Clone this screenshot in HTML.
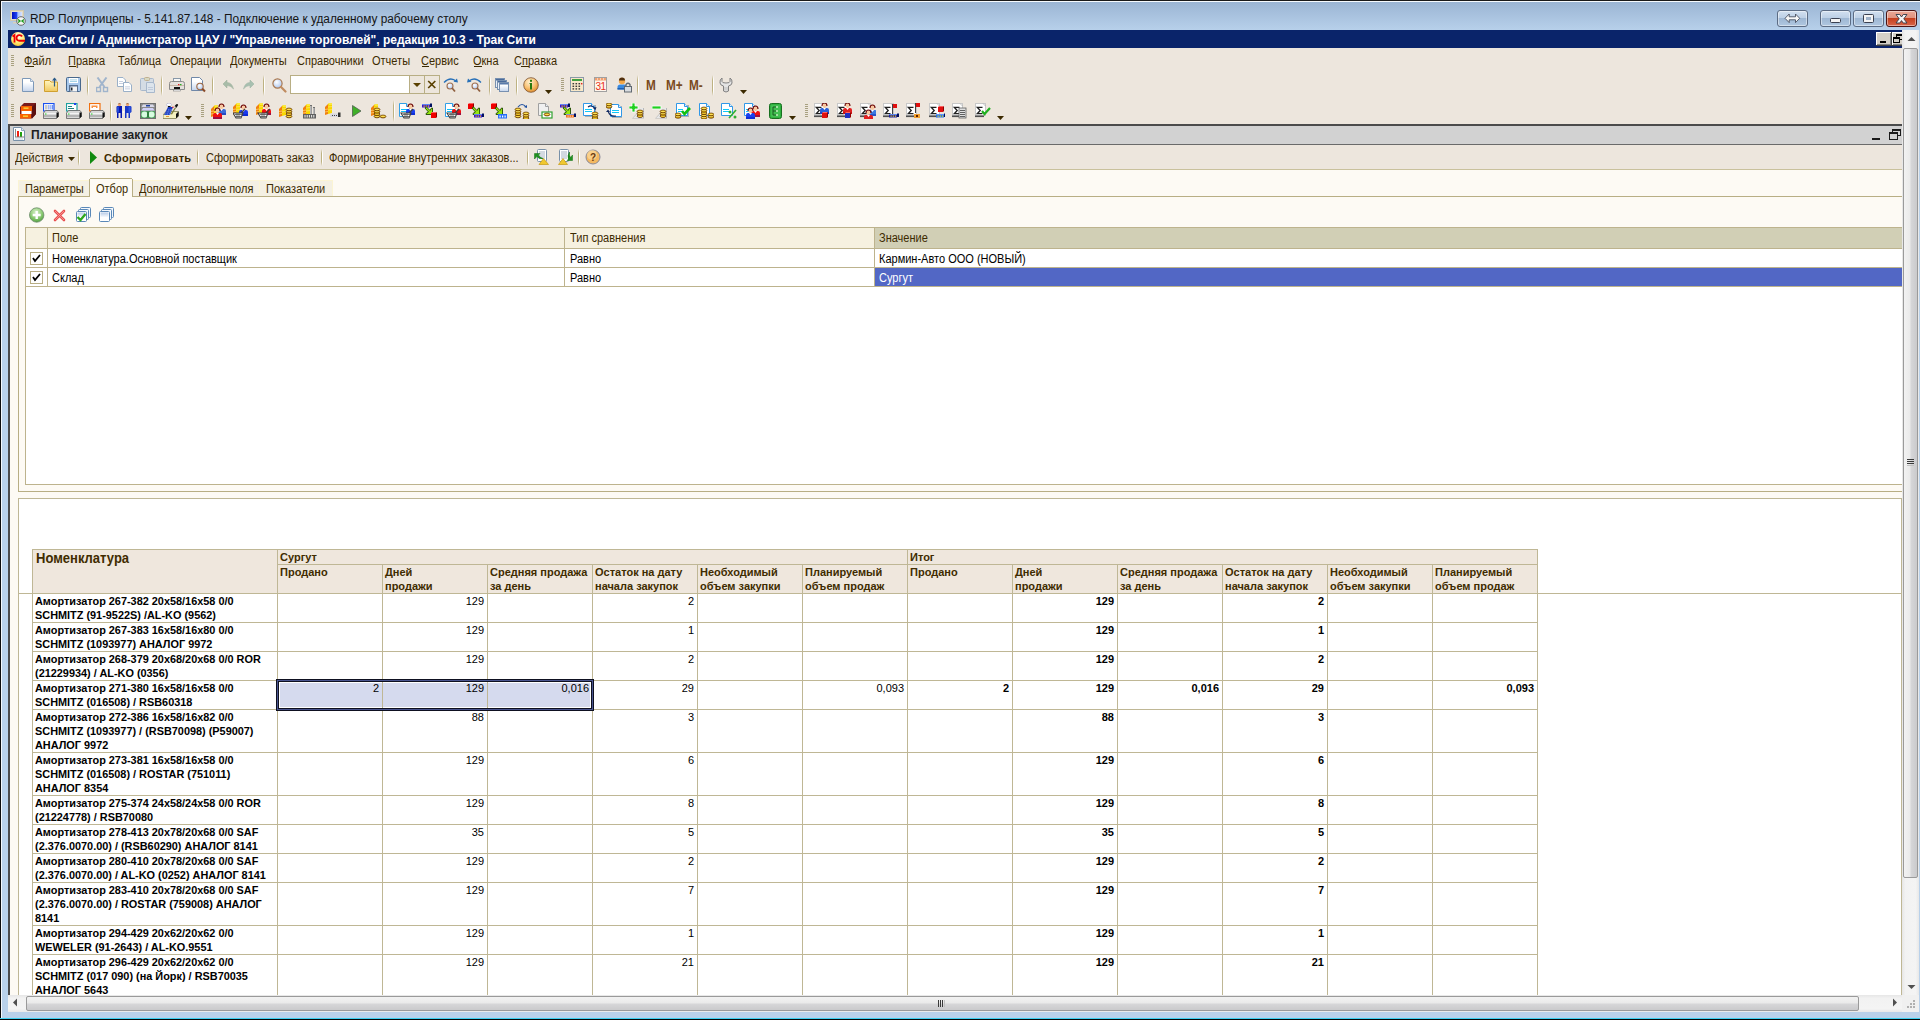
<!DOCTYPE html><html><head><meta charset="utf-8"><style>
html,body{margin:0;padding:0;width:1920px;height:1020px;overflow:hidden;background:#000}
body>div,body>svg{position:absolute}
.t{position:absolute;white-space:pre;font-family:"Liberation Sans",sans-serif}
</style></head><body>
<div style="left:0px;top:0px;width:1920px;height:1020px;background:#B9D1EA;"></div>
<div style="left:0px;top:2px;width:1920px;height:28px;background:linear-gradient(#9BB5D4,#B7D0EA);"></div>
<div style="left:0px;top:0px;width:1px;height:1020px;background:#0B0B0B;"></div>
<div style="left:0px;top:0px;width:1920px;height:1px;background:#1A1A1A;"></div>
<div style="left:1px;top:1px;width:1px;height:1017px;background:#F4F8FC;"></div>
<div style="left:1px;top:1px;width:1919px;height:1px;background:#F6FAFE;"></div>
<div style="left:0px;top:1018px;width:1920px;height:1px;background:#3CCFF0;"></div>
<div style="left:0px;top:1019px;width:1920px;height:1px;background:#050505;"></div>
<svg style="left:10px;top:10px;" width="16" height="16" viewBox="0 0 16 16">
<defs><linearGradient id="gScr" x1="0" y1="0" x2="1" y2="0"><stop offset="0" stop-color="#0010C0"/><stop offset="0.45" stop-color="#2040F0"/><stop offset="0.6" stop-color="#A8C0FF"/><stop offset="1" stop-color="#D8E4FF"/></linearGradient></defs>
<rect x="0.5" y="0.5" width="13" height="10" fill="#E4DCC8" stroke="#D0C8B0"/>
<rect x="2" y="2" width="10" height="7" fill="url(#gScr)"/>
<rect x="3" y="12" width="4" height="1.5" fill="#D8D0BC"/>
<circle cx="11" cy="11" r="4.3" fill="#F4F4F4" stroke="#6A6A6A" stroke-width="1"/>
<path d="M8 9.5 L10 11 L8 12.5 M14 9.5 L12 11 L14 12.5" stroke="#1A9A1A" stroke-width="1.3" fill="none"/>
</svg>
<div class="t" style="left:30px;top:13px;font-size:12px;line-height:12px;color:#141414;transform:scaleX(0.988);transform-origin:0 0;">RDP Полуприцепы - 5.141.87.148 - Подключение к удаленному рабочему столу</div>
<div style="left:1777px;top:10px;width:31px;height:17px;background:linear-gradient(#D2E0F0 0%,#BDD0E6 45%,#9EB7D3 50%,#B0C7E0 100%);border:1px solid #5C6C84;border-radius:3px;box-sizing:border-box;box-shadow:inset 0 0 0 1px rgba(255,255,255,0.45)"></div>
<svg style="left:1777px;top:10px;" width="31" height="17" viewBox="0 0 31 17"><path d="M8 8.3 L12.2 4 L12.2 6.8 L18.5 6.8 L18.5 4 L22.7 8.3 L18.5 12.6 L18.5 9.8 L12.2 9.8 L12.2 12.6 Z" fill="#F8F8F8" stroke="#4A5060" stroke-width="0.9"/></svg>
<div style="left:1820px;top:10px;width:31px;height:17px;background:linear-gradient(#D2E0F0 0%,#BDD0E6 45%,#9EB7D3 50%,#B0C7E0 100%);border:1px solid #5C6C84;border-radius:3px;box-sizing:border-box;box-shadow:inset 0 0 0 1px rgba(255,255,255,0.45)"></div>
<svg style="left:1820px;top:10px;" width="31" height="17" viewBox="0 0 31 17"><rect x="10.5" y="8.5" width="10" height="4" rx="1" fill="#F4F4F4" stroke="#3A4050"/></svg>
<div style="left:1853px;top:10px;width:31px;height:17px;background:linear-gradient(#D2E0F0 0%,#BDD0E6 45%,#9EB7D3 50%,#B0C7E0 100%);border:1px solid #5C6C84;border-radius:3px;box-sizing:border-box;box-shadow:inset 0 0 0 1px rgba(255,255,255,0.45)"></div>
<svg style="left:1853px;top:10px;" width="31" height="17" viewBox="0 0 31 17"><rect x="10.5" y="4.5" width="10" height="8" rx="1" fill="#F4F4F4" stroke="#3A4050"/><rect x="13" y="7" width="5" height="3" fill="#9FB2CA"/></svg>
<div style="left:1886px;top:10px;width:31px;height:17px;background:linear-gradient(#EBA896 0%,#E19380 45%,#C5401F 50%,#D8664A 100%);border:1px solid #4B1414;border-radius:3px;box-sizing:border-box;box-shadow:inset 0 0 0 1px rgba(255,255,255,0.45)"></div>
<svg style="left:1886px;top:10px;" width="31" height="17" viewBox="0 0 31 17"><path d="M10 4.5 L13.8 4.5 L15.5 7 L17.2 4.5 L21 4.5 L17.8 8.8 L21 13 L17.2 13 L15.5 10.6 L13.8 13 L10 13 L13.2 8.8 Z" fill="#F4F4F4" stroke="#303A48" stroke-width="0.9"/></svg>
<div style="left:8px;top:30px;width:1894px;height:18px;background:#0A246A;"></div>
<svg style="left:11px;top:32px;" width="15" height="15" viewBox="0 0 15 15">
<defs><radialGradient id="g1c" cx="0.5" cy="0.3" r="0.75"><stop offset="0" stop-color="#FFFFF0"/><stop offset="0.55" stop-color="#FFF080"/><stop offset="1" stop-color="#F0C030"/></radialGradient></defs>
<circle cx="7" cy="7" r="7" fill="url(#g1c)"/>
<path d="M1.5 4.5 L3.5 3 L3.5 10.5" stroke="#F00000" stroke-width="1.8" fill="none"/>
<path d="M11 4.5 C10 2.5 6 2.5 5.5 5.5 C5.3 7.5 6.5 8.7 8.5 8.7 L14 8.7" stroke="#F00000" stroke-width="1.9" fill="none"/>
</svg>
<div class="t" style="left:28px;top:34px;font-size:12px;line-height:12px;color:#FFFFFF;font-weight:bold;">Трак Сити / Администратор ЦАУ / &quot;Управление торговлей&quot;, редакция 10.3 - Трак Сити</div>
<div style="left:1876px;top:32px;width:16px;height:14px;background:#D4D0C8;box-shadow:inset -1px -1px #404040, inset 1px 1px #FFFFFF, inset -2px -2px #808080"></div>
<div style="left:1892px;top:32px;width:16px;height:14px;background:#D4D0C8;box-shadow:inset -1px -1px #404040, inset 1px 1px #FFFFFF, inset -2px -2px #808080"></div>
<div style="left:1880px;top:41px;width:6px;height:2px;background:#000;"></div>
<svg style="left:1892px;top:32px;" width="10" height="14" viewBox="0 0 10 14"><rect x="4.5" y="2.5" width="6" height="5" fill="none" stroke="#000"/><rect x="4" y="2" width="7" height="2" fill="#000"/><rect x="1.5" y="5.5" width="6" height="5" fill="#D4D0C8" stroke="#000"/><rect x="1" y="5" width="7" height="2" fill="#000"/></svg>
<div style="left:1902px;top:30px;width:1px;height:18px;background:#F0F0F0;"></div>
<div style="left:8px;top:48px;width:1894px;height:76px;background:#EDE6DD;"></div>
<svg style="left:11px;top:55px;" width="4" height="11" viewBox="0 0 4 11"><rect x="0" y="0" width="3" height="1" fill="#A8A080"/><rect x="0" y="2" width="3" height="1" fill="#A8A080"/><rect x="0" y="4" width="3" height="1" fill="#A8A080"/><rect x="0" y="6" width="3" height="1" fill="#A8A080"/><rect x="0" y="8" width="3" height="1" fill="#A8A080"/><rect x="0" y="10" width="3" height="1" fill="#A8A080"/></svg>
<div class="t" style="left:24px;top:55px;font-size:12px;line-height:12px;color:#3C2A00;transform:scaleX(0.917);transform-origin:0 0;">Файл</div>
<div class="t" style="left:68px;top:55px;font-size:12px;line-height:12px;color:#3C2A00;transform:scaleX(0.917);transform-origin:0 0;">Правка</div>
<div class="t" style="left:118px;top:55px;font-size:12px;line-height:12px;color:#3C2A00;transform:scaleX(0.917);transform-origin:0 0;">Таблица</div>
<div class="t" style="left:170px;top:55px;font-size:12px;line-height:12px;color:#3C2A00;transform:scaleX(0.917);transform-origin:0 0;">Операции</div>
<div class="t" style="left:230px;top:55px;font-size:12px;line-height:12px;color:#3C2A00;transform:scaleX(0.917);transform-origin:0 0;">Документы</div>
<div class="t" style="left:297px;top:55px;font-size:12px;line-height:12px;color:#3C2A00;transform:scaleX(0.917);transform-origin:0 0;">Справочники</div>
<div class="t" style="left:372px;top:55px;font-size:12px;line-height:12px;color:#3C2A00;transform:scaleX(0.917);transform-origin:0 0;">Отчеты</div>
<div class="t" style="left:421px;top:55px;font-size:12px;line-height:12px;color:#3C2A00;transform:scaleX(0.917);transform-origin:0 0;">Сервис</div>
<div class="t" style="left:473px;top:55px;font-size:12px;line-height:12px;color:#3C2A00;transform:scaleX(0.917);transform-origin:0 0;">Окна</div>
<div class="t" style="left:514px;top:55px;font-size:12px;line-height:12px;color:#3C2A00;transform:scaleX(0.917);transform-origin:0 0;">Справка</div>
<div style="left:25px;top:66px;width:9px;height:1px;background:#3C2A00;"></div>
<div style="left:69px;top:66px;width:7px;height:1px;background:#3C2A00;"></div>
<div style="left:422px;top:66px;width:7px;height:1px;background:#3C2A00;"></div>
<div style="left:474px;top:66px;width:8px;height:1px;background:#3C2A00;"></div>
<div style="left:521px;top:66px;width:8px;height:1px;background:#3C2A00;"></div>
<svg style="left:0;top:0;position:absolute" width="0" height="0"><defs>
<linearGradient id="gPage" x1="0" y1="0" x2="0" y2="1"><stop offset="0.3" stop-color="#FFFFFF"/><stop offset="1" stop-color="#C4D4EC"/></linearGradient>
<linearGradient id="gFold" x1="0" y1="0" x2="0" y2="1"><stop offset="0" stop-color="#FFF6C0"/><stop offset="1" stop-color="#F0C860"/></linearGradient>
<radialGradient id="gInfo" cx="0.4" cy="0.3" r="0.7"><stop offset="0" stop-color="#FFF0D0"/><stop offset="0.6" stop-color="#F8C070"/><stop offset="1" stop-color="#E09030"/></radialGradient>
<radialGradient id="gLens" cx="0.4" cy="0.35" r="0.7"><stop offset="0" stop-color="#FFFFFF"/><stop offset="1" stop-color="#A8C4F0"/></radialGradient>
</defs><svg width="0" height="0"><defs>
<radialGradient id="gAdd" cx="0.45" cy="0.3" r="0.75"><stop offset="0" stop-color="#D8F0C8"/><stop offset="0.6" stop-color="#88C870"/><stop offset="1" stop-color="#4A9A38"/></radialGradient>
<linearGradient id="gBox" x1="0" y1="0" x2="0" y2="1"><stop offset="0" stop-color="#B8CCE8"/><stop offset="1" stop-color="#FFFFFF"/></linearGradient>
</defs></svg></svg>
<svg style="left:11px;top:78px;" width="4" height="13" viewBox="0 0 4 13"><rect x="0" y="0" width="3" height="1" fill="#A8A080"/><rect x="0" y="2" width="3" height="1" fill="#A8A080"/><rect x="0" y="4" width="3" height="1" fill="#A8A080"/><rect x="0" y="6" width="3" height="1" fill="#A8A080"/><rect x="0" y="8" width="3" height="1" fill="#A8A080"/><rect x="0" y="10" width="3" height="1" fill="#A8A080"/><rect x="0" y="12" width="3" height="1" fill="#A8A080"/></svg>
<svg style="left:21px;top:77px;" width="16" height="16" viewBox="0 0 16 16"><path d="M1.5 1.5 L9.5 1.5 L12.5 4.5 L12.5 14.5 L1.5 14.5 Z" fill="url(#gPage)" stroke="#7C98B8"/><path d="M9.5 1.5 L9.5 4.5 L12.5 4.5" fill="#DDE6F2" stroke="#9AB0C8"/></svg>
<svg style="left:43px;top:77px;" width="16" height="16" viewBox="0 0 16 16"><path d="M1.5 3.5 L6.5 3.5 L8 5 L14.5 5 L14.5 14.5 L1.5 14.5 Z" fill="url(#gFold)" stroke="#D0A030"/><path d="M11.5 9.5 L11.5 1" stroke="#2A5A88" stroke-width="1.2"/><path d="M9 3.5 L11.5 0.5 L14 3.5 Z" fill="#2A5A88"/></svg>
<svg style="left:65px;top:77px;" width="16" height="16" viewBox="0 0 16 16"><rect x="1.5" y="0.5" width="14" height="14" rx="1" fill="#A8C8EC" stroke="#48688C"/><rect x="4" y="1" width="9" height="5" fill="#FFFFFF"/><rect x="5" y="2.5" width="7" height="0.8" fill="#90C8E0"/><rect x="5" y="4.2" width="7" height="0.8" fill="#90C8E0"/><rect x="4" y="8" width="9" height="6.5" fill="#5A7090"/><rect x="5.5" y="9.5" width="6.5" height="5" fill="#F4F4F4"/><rect x="6" y="10.5" width="1.5" height="3" fill="#202830"/></svg>
<svg style="left:96px;top:77px;" width="16" height="16" viewBox="0 0 16 16"><path d="M1.5 0.5 L8.5 10 M10.5 0.5 L3.5 10" fill="none" stroke="#A0B4CC" stroke-width="2"/><rect x="0.5" y="10.5" width="4" height="4" fill="none" stroke="#A0B4CC" stroke-width="1.4"/><rect x="7.5" y="10.5" width="4" height="4" fill="none" stroke="#A0B4CC" stroke-width="1.4"/></svg>
<svg style="left:117px;top:77px;" width="16" height="16" viewBox="0 0 16 16"><path d="M0.5 0.5 L6 0.5 L8.5 3 L8.5 9.5 L0.5 9.5 Z" fill="#FFFFFF" stroke="#9AB0C8"/><rect x="2" y="4" width="4" height="0.8" fill="#B8C4D8"/><rect x="2" y="6" width="4" height="0.8" fill="#B8C4D8"/><path d="M6.5 5.5 L12 5.5 L14.5 8 L14.5 14.5 L6.5 14.5 Z" fill="#FFFFFF" stroke="#9AB0C8"/><rect x="8" y="9.5" width="5" height="0.8" fill="#B8C4D8"/><rect x="8" y="11.5" width="5" height="0.8" fill="#B8C4D8"/></svg>
<svg style="left:140px;top:77px;" width="16" height="16" viewBox="0 0 16 16"><rect x="0.5" y="1.5" width="13" height="12" rx="1" fill="#D4DCE4" stroke="#A8B8CC"/><rect x="4.5" y="0.5" width="5" height="3" rx="1" fill="#D8D8C0" stroke="#C0B090"/><path d="M6.5 5.5 L13 5.5 L14.5 7 L14.5 15.5 L6.5 15.5 Z" fill="#DCE4EC" stroke="#A8B8CC"/><rect x="8" y="10" width="5" height="0.8" fill="#B8C4D8"/><rect x="8" y="12" width="5" height="0.8" fill="#B8C4D8"/></svg>
<svg style="left:169px;top:77px;" width="16" height="16" viewBox="0 0 16 16"><rect x="4.5" y="1.5" width="7" height="4" fill="#F8F8F8" stroke="#8898A8"/><path d="M0.5 6.5 Q0.5 4.5 2.5 4.5 L13.5 4.5 Q15.5 4.5 15.5 6.5 L15.5 12.5 L0.5 12.5 Z" fill="#E4E0DC" stroke="#8A8A8A"/><rect x="1" y="8" width="14" height="1" fill="#C8B8A8"/><rect x="5" y="10" width="6" height="2.5" fill="#101010"/><rect x="4.5" y="12.5" width="7" height="1.5" fill="#FFFFFF" stroke="#808080" stroke-width="0.6"/><rect x="9" y="7" width="1.5" height="1.2" fill="#E02020"/><rect x="11" y="7" width="1.5" height="1.2" fill="#20B020"/></svg>
<svg style="left:191px;top:77px;" width="16" height="16" viewBox="0 0 16 16"><path d="M0.5 0.5 L8.5 0.5 L11.5 3.5 L11.5 13.5 L0.5 13.5 Z" fill="url(#gPage)" stroke="#7088A8"/><circle cx="9" cy="9.5" r="3.2" fill="url(#gLens)" stroke="#A06840" stroke-width="1.1"/><path d="M11.3 11.8 L14 14.5" stroke="#8A4A28" stroke-width="2"/></svg>
<svg style="left:221px;top:77px;" width="16" height="16" viewBox="0 0 16 16"><path d="M2 7 L6 3 L6 5.5 Q11 5.5 12.5 12 Q10 8.5 6 8.5 L6 11 Z" fill="#A8BCA8" stroke="#98AC98" stroke-width="0.5"/></svg>
<svg style="left:240px;top:77px;" width="16" height="16" viewBox="0 0 16 16"><path d="M14 7 L10 3 L10 5.5 Q5 5.5 3.5 12 Q6 8.5 10 8.5 L10 11 Z" fill="#A8C0B0" stroke="#98B0A0" stroke-width="0.5"/></svg>
<svg style="left:271px;top:77px;" width="16" height="16" viewBox="0 0 16 16"><circle cx="6.5" cy="6.5" r="4.6" fill="url(#gLens)" stroke="#A87850" stroke-width="1.2"/><path d="M9.8 9.8 L14.5 14.5" stroke="#C08C60" stroke-width="2.2" stroke-linecap="round"/></svg>
<svg style="left:443px;top:77px;" width="16" height="16" viewBox="0 0 16 16"><path d="M1 5.5 Q7.5 -1 13.5 4.5" fill="none" stroke="#2870B8" stroke-width="1.3"/><path d="M10.5 4.8 L15 5.5 L14 1.5 Z" fill="#2870B8"/><circle cx="7" cy="9" r="3" fill="url(#gLens)" stroke="#A07050" stroke-width="1.1"/><path d="M9 11 L12 14.5" stroke="#906040" stroke-width="1.8"/></svg>
<svg style="left:466px;top:77px;" width="16" height="16" viewBox="0 0 16 16"><path d="M15 5.5 Q8.5 -1 2.5 4.5" fill="none" stroke="#2870B8" stroke-width="1.3"/><path d="M5.5 4.8 L1 5.5 L2 1.5 Z" fill="#2870B8"/><circle cx="9" cy="9" r="3" fill="url(#gLens)" stroke="#A07050" stroke-width="1.1"/><path d="M11 11 L14 14.5" stroke="#906040" stroke-width="1.8"/></svg>
<svg style="left:494px;top:77px;" width="16" height="16" viewBox="0 0 16 16"><rect x="1.5" y="1.5" width="9" height="9" fill="#E8EEF6" stroke="#7890B0"/><rect x="2" y="2" width="8" height="1.5" fill="#4A6A9A"/><rect x="3.5" y="3.5" width="9" height="9" fill="#EEF2F8" stroke="#7890B0"/><rect x="4" y="4" width="8" height="1.5" fill="#4A6A9A"/><rect x="5.5" y="5.5" width="9" height="9" fill="url(#gPage)" stroke="#7890B0"/><rect x="6" y="6" width="8" height="1.5" fill="#5A7AAA"/></svg>
<svg style="left:523px;top:77px;" width="16" height="16" viewBox="0 0 16 16"><circle cx="8" cy="8" r="7.3" fill="url(#gInfo)" stroke="#7A5030" stroke-width="0.8"/><rect x="7" y="2.8" width="2" height="2" fill="#2A7A10"/><path d="M6.5 6 L9 6 L9 12.5 L7 12.5 L7 7 L6.5 7 Z" fill="#2A7A10"/></svg>
<svg style="left:570px;top:77px;" width="16" height="16" viewBox="0 0 16 16"><rect x="0.5" y="0.5" width="13" height="14" fill="#F8E8C8" stroke="#8A9AA8"/><rect x="2" y="2" width="10" height="2" fill="#40A040"/><rect x="2.5" y="6.0" width="1.6" height="1.4" fill="#3A3A3A"/><rect x="5.5" y="6.0" width="1.6" height="1.4" fill="#3A3A3A"/><rect x="8.5" y="6.0" width="1.6" height="1.4" fill="#3A3A3A"/><rect x="2.5" y="8.6" width="1.6" height="1.4" fill="#3A3A3A"/><rect x="5.5" y="8.6" width="1.6" height="1.4" fill="#3A3A3A"/><rect x="8.5" y="8.6" width="1.6" height="1.4" fill="#3A3A3A"/><rect x="2.5" y="11.2" width="1.6" height="1.4" fill="#3A3A3A"/><rect x="5.5" y="11.2" width="1.6" height="1.4" fill="#3A3A3A"/><rect x="8.5" y="11.2" width="1.6" height="1.4" fill="#3A3A3A"/><rect x="11" y="6" width="1.4" height="1.4" fill="#E02020"/></svg>
<svg style="left:594px;top:77px;" width="16" height="16" viewBox="0 0 16 16"><rect x="0.5" y="0.5" width="12" height="14" fill="#FFF6EC" stroke="#A0A0A0"/><rect x="1" y="1" width="11" height="2.5" fill="#F0A070"/><rect x="3" y="1.5" width="1" height="1" fill="#fff"/><rect x="6" y="1.5" width="1" height="1" fill="#fff"/><rect x="9" y="1.5" width="1" height="1" fill="#fff"/><text x="6.5" y="13.2" font-family="Liberation Sans" font-size="10" text-anchor="middle" fill="#E83018" letter-spacing="-0.5">31</text></svg>
<svg style="left:617px;top:77px;" width="16" height="16" viewBox="0 0 16 16"><path d="M0.5 12.5 L0.5 10 Q0.5 7.5 3.5 7.5 L7 7.5 Q9.5 7.5 9.5 10 L9.5 12.5 Z" fill="#3A8AE0"/><path d="M0.5 12.5 L9 12.5 L9 11 L0.5 11 Z" fill="#2060B0"/><circle cx="5" cy="4" r="3.2" fill="#F4A848"/><path d="M2 3.5 Q2 0.5 5 0.5 Q8 0.5 8 3.5" fill="#503010"/><rect x="7.5" y="9.5" width="7" height="5.5" fill="#D8DCE0" stroke="#606870"/><path d="M9 9.5 L9 7.5 Q11 5 13 7.5 L13 9.5" fill="none" stroke="#606870" stroke-width="1.3"/></svg>
<svg style="left:718px;top:77px;" width="16" height="16" viewBox="0 0 16 16"><path d="M4 1 L4 4.5 Q4 6 8 6 Q12 6 12 4.5 L12 1 Q14.5 2.5 14 6 Q13.5 8.5 10.5 9 L10.5 14 Q8 16 5.5 14 L5.5 9 Q2.5 8.5 2 6 Q1.5 2.5 4 1 Z" fill="#E4E4E4" stroke="#808080" stroke-width="1"/><path d="M7 10 L7 13.5 M9 10 L9 13.5" stroke="#B0B0B0" stroke-width="0.8"/></svg>
<div style="left:87px;top:75px;width:1px;height:21px;background:linear-gradient(rgba(190,178,130,0),#BEB282 25%,#BEB282 75%,rgba(190,178,130,0))"></div>
<div style="left:88px;top:75px;width:1px;height:21px;background:linear-gradient(rgba(255,255,255,0),#FFFFFF 25%,#FFFFFF 75%,rgba(255,255,255,0))"></div>
<div style="left:161px;top:75px;width:1px;height:21px;background:linear-gradient(rgba(190,178,130,0),#BEB282 25%,#BEB282 75%,rgba(190,178,130,0))"></div>
<div style="left:162px;top:75px;width:1px;height:21px;background:linear-gradient(rgba(255,255,255,0),#FFFFFF 25%,#FFFFFF 75%,rgba(255,255,255,0))"></div>
<div style="left:212px;top:75px;width:1px;height:21px;background:linear-gradient(rgba(190,178,130,0),#BEB282 25%,#BEB282 75%,rgba(190,178,130,0))"></div>
<div style="left:213px;top:75px;width:1px;height:21px;background:linear-gradient(rgba(255,255,255,0),#FFFFFF 25%,#FFFFFF 75%,rgba(255,255,255,0))"></div>
<div style="left:263px;top:75px;width:1px;height:21px;background:linear-gradient(rgba(190,178,130,0),#BEB282 25%,#BEB282 75%,rgba(190,178,130,0))"></div>
<div style="left:264px;top:75px;width:1px;height:21px;background:linear-gradient(rgba(255,255,255,0),#FFFFFF 25%,#FFFFFF 75%,rgba(255,255,255,0))"></div>
<div style="left:489px;top:75px;width:1px;height:21px;background:linear-gradient(rgba(190,178,130,0),#BEB282 25%,#BEB282 75%,rgba(190,178,130,0))"></div>
<div style="left:490px;top:75px;width:1px;height:21px;background:linear-gradient(rgba(255,255,255,0),#FFFFFF 25%,#FFFFFF 75%,rgba(255,255,255,0))"></div>
<div style="left:516px;top:75px;width:1px;height:21px;background:linear-gradient(rgba(190,178,130,0),#BEB282 25%,#BEB282 75%,rgba(190,178,130,0))"></div>
<div style="left:517px;top:75px;width:1px;height:21px;background:linear-gradient(rgba(255,255,255,0),#FFFFFF 25%,#FFFFFF 75%,rgba(255,255,255,0))"></div>
<div style="left:637px;top:75px;width:1px;height:21px;background:linear-gradient(rgba(190,178,130,0),#BEB282 25%,#BEB282 75%,rgba(190,178,130,0))"></div>
<div style="left:638px;top:75px;width:1px;height:21px;background:linear-gradient(rgba(255,255,255,0),#FFFFFF 25%,#FFFFFF 75%,rgba(255,255,255,0))"></div>
<div style="left:712px;top:75px;width:1px;height:21px;background:linear-gradient(rgba(190,178,130,0),#BEB282 25%,#BEB282 75%,rgba(190,178,130,0))"></div>
<div style="left:713px;top:75px;width:1px;height:21px;background:linear-gradient(rgba(255,255,255,0),#FFFFFF 25%,#FFFFFF 75%,rgba(255,255,255,0))"></div>
<div style="left:290px;top:75px;width:150px;height:19px;background:#FFFFFF;border:1px solid #B8AE84;box-sizing:border-box"></div>
<div style="left:410px;top:76px;width:14px;height:17px;background:#EDE6DC;"></div>
<div style="left:425px;top:76px;width:14px;height:17px;background:#EDE6DC;"></div>
<div style="left:409px;top:76px;width:1px;height:17px;background:#B8AE84;"></div>
<div style="left:424px;top:76px;width:1px;height:17px;background:#B8AE84;"></div>
<svg style="left:413px;top:83px;" width="8" height="4" viewBox="0 0 8 4"><path d="M0 0 L8 0 L4 4 Z" fill="#5A4000"/></svg>
<svg style="left:427px;top:80px;" width="10" height="9" viewBox="0 0 10 9"><path d="M1.2 1 L8.3 8 M8.3 1 L1.2 8" stroke="#5A4000" stroke-width="1.7"/></svg>
<svg style="left:545px;top:90px;" width="8" height="5" viewBox="0 0 8 5"><path d="M0 0 L7 0 L3.5 4 Z" fill="#3C2A00"/></svg>
<svg style="left:561px;top:78px;" width="4" height="13" viewBox="0 0 4 13"><rect x="0" y="0" width="3" height="1" fill="#A8A080"/><rect x="0" y="2" width="3" height="1" fill="#A8A080"/><rect x="0" y="4" width="3" height="1" fill="#A8A080"/><rect x="0" y="6" width="3" height="1" fill="#A8A080"/><rect x="0" y="8" width="3" height="1" fill="#A8A080"/><rect x="0" y="10" width="3" height="1" fill="#A8A080"/><rect x="0" y="12" width="3" height="1" fill="#A8A080"/></svg>
<div class="t" style="left:646px;top:78px;font-size:14px;line-height:14px;color:#7A4A1E;font-weight:bold;transform:scaleX(0.84);transform-origin:0 0;">M</div>
<div class="t" style="left:666px;top:78px;font-size:14px;line-height:14px;color:#7A4A1E;font-weight:bold;transform:scaleX(0.84);transform-origin:0 0;">M+</div>
<div class="t" style="left:689px;top:78px;font-size:14px;line-height:14px;color:#7A4A1E;font-weight:bold;transform:scaleX(0.84);transform-origin:0 0;">M-</div>
<svg style="left:740px;top:90px;" width="8" height="5" viewBox="0 0 8 5"><path d="M0 0 L7 0 L3.5 4 Z" fill="#3C2A00"/></svg>
<svg style="left:11px;top:104px;" width="4" height="13" viewBox="0 0 4 13"><rect x="0" y="0" width="3" height="1" fill="#A8A080"/><rect x="0" y="2" width="3" height="1" fill="#A8A080"/><rect x="0" y="4" width="3" height="1" fill="#A8A080"/><rect x="0" y="6" width="3" height="1" fill="#A8A080"/><rect x="0" y="8" width="3" height="1" fill="#A8A080"/><rect x="0" y="10" width="3" height="1" fill="#A8A080"/><rect x="0" y="12" width="3" height="1" fill="#A8A080"/></svg>
<svg style="left:20px;top:103px;" width="16" height="16" viewBox="0 0 16 16"><path d="M4 0 L16 0 L16 11 L12 15.5 L0 15.5 L0 4 Z" fill="#7A1C1C"/><path d="M12 4 L16 0 L16 11 L12 15.5 Z" fill="#5A1010"/><rect x="1" y="3" width="11" height="5" fill="#F86000"/><rect x="3.5" y="4.5" width="5" height="1.3" fill="#F8E040"/><rect x="1.5" y="8" width="10" height="3" fill="#FFFFFF"/><rect x="0" y="11" width="11" height="4.5" fill="#F86000"/><rect x="3" y="12.5" width="5" height="1.3" fill="#F8E040"/></svg>
<svg style="left:43px;top:103px;" width="16" height="16" viewBox="0 0 16 16"><rect x="0.5" y="0.5" width="10.5" height="7.5" fill="#FFFFFF" stroke="#1850F0" stroke-width="1.2"/><rect x="2" y="2" width="2.5" height="4.5" fill="#C8C8C8"/><rect x="5.5" y="2" width="0.8" height="4.5" fill="#4070F0"/><rect x="7.5" y="2" width="0.8" height="4.5" fill="#4070F0"/><rect x="9.2" y="2" width="0.8" height="4.5" fill="#4070F0"/><path d="M0.5 10 L2.5 7.5 L14 7.5 L15.5 9.5 L15.5 13.5 L13.5 15.5 L0.5 15.5 Z" fill="#D8D8D8" stroke="#606060" stroke-width="0.8"/><rect x="1" y="10" width="13" height="1" fill="#F4F4F4"/><rect x="1" y="12.5" width="13" height="1" fill="#909090"/><path d="M13.5 9.5 L15.5 9.5 L15.5 13.5 L13.5 15.5 Z" fill="#101010"/><rect x="2" y="10.5" width="1.5" height="1" fill="#20D020"/></svg>
<svg style="left:66px;top:103px;" width="16" height="16" viewBox="0 0 16 16"><rect x="0.5" y="0.5" width="10.5" height="7.5" fill="#FFFFFF" stroke="#20A0A0" stroke-width="1.2"/><path d="M2 3.5 L6 3.5 M2 5.5 L8 5.5" stroke="#208080" stroke-width="1.1"/><rect x="8" y="0" width="2" height="2" fill="#2040F0"/><path d="M0.5 10 L2.5 7.5 L14 7.5 L15.5 9.5 L15.5 13.5 L13.5 15.5 L0.5 15.5 Z" fill="#D8D8D8" stroke="#606060" stroke-width="0.8"/><rect x="1" y="10" width="13" height="1" fill="#F4F4F4"/><rect x="1" y="12.5" width="13" height="1" fill="#909090"/><path d="M13.5 9.5 L15.5 9.5 L15.5 13.5 L13.5 15.5 Z" fill="#101010"/><rect x="2" y="10.5" width="1.5" height="1" fill="#20D020"/></svg>
<svg style="left:89px;top:103px;" width="16" height="16" viewBox="0 0 16 16"><rect x="0.5" y="0.5" width="10.5" height="7.5" fill="#FFFFFF" stroke="#F07010" stroke-width="1.2"/><path d="M2.5 2.5 L8.5 2.5 L8.5 5 L7 5 L7 4 L4 4 L4 5 L2.5 5 Z" fill="#F89040"/><path d="M0.5 10 L2.5 7.5 L14 7.5 L15.5 9.5 L15.5 13.5 L13.5 15.5 L0.5 15.5 Z" fill="#D8D8D8" stroke="#606060" stroke-width="0.8"/><rect x="1" y="10" width="13" height="1" fill="#F4F4F4"/><rect x="1" y="12.5" width="13" height="1" fill="#909090"/><path d="M13.5 9.5 L15.5 9.5 L15.5 13.5 L13.5 15.5 Z" fill="#101010"/><rect x="2" y="10.5" width="1.5" height="1" fill="#20D020"/></svg>
<svg style="left:116px;top:103px;" width="16" height="16" viewBox="0 0 16 16"><path d="M0.5 4 Q0.5 3 2 3 L6 3 L6 15 L4.5 15 L4.5 10 L2.5 10 L2.5 15 L1 15 L1 10 L0.5 9 Z" fill="#0818B0"/><rect x="1" y="3.5" width="2" height="6" fill="#2048D8"/><path d="M15.5 4 Q15.5 3 14 3 L9 3 L9 15 L10.5 15 L10.5 10 L12.5 10 L12.5 15 L14 15 L14 10 L15.5 9 Z" fill="#1838C8"/><rect x="12.5" y="3.5" width="2" height="6" fill="#3058E0"/><circle cx="3.5" cy="1.6" r="1.6" fill="#E8A070"/><path d="M2 1 Q3.5 -0.5 5 1" fill="#806040"/><circle cx="11.5" cy="1.6" r="1.6" fill="#E8A070"/><path d="M10 1 Q11.5 -0.5 13 1" fill="#806040"/><path d="M6 9 L7.5 8 L9 9 L7.5 10 Z" fill="#FFFFFF"/></svg>
<svg style="left:140px;top:103px;" width="16" height="16" viewBox="0 0 16 16"><rect x="0.5" y="0.5" width="15" height="15" fill="#8A8A8A" stroke="#707070"/><path d="M1.5 4 L3 1.5 L13 1.5 L14.5 4 Z" fill="#D8D8E8"/><rect x="6" y="2" width="4" height="1.5" fill="#2040A0"/><path d="M1.5 7.5 L3 5 L13 5 L14.5 7.5 Z" fill="#D0D0F8"/><rect x="1" y="8" width="14" height="7" fill="#50A060"/><ellipse cx="4.5" cy="11.5" rx="3" ry="3" fill="#D8FCE0"/><ellipse cx="11.5" cy="11.5" rx="3" ry="3" fill="#D8FCE0"/><rect x="7" y="8.5" width="2" height="6" fill="#308040"/></svg>
<svg style="left:163px;top:103px;" width="16" height="16" viewBox="0 0 16 16"><path d="M0 12 L3 8.5 L15.5 8.5 L15.5 13 L13 15.5 L0 15.5 Z" fill="#F4F0C0" stroke="#707040" stroke-width="0.7"/><path d="M13 15.5 L15.5 13 L15.5 8.5 L13 11 Z" fill="#101010"/><path d="M1 12 L5 4 L10 4 L7 12 Z" fill="#1838C0"/><rect x="2.5" y="10.5" width="0.9" height="0.9" fill="#A0C8FF"/><rect x="4.2" y="10.5" width="0.9" height="0.9" fill="#A0C8FF"/><rect x="5.9" y="10.5" width="0.9" height="0.9" fill="#A0C8FF"/><rect x="3.7" y="8.5" width="0.9" height="0.9" fill="#A0C8FF"/><rect x="5.4" y="8.5" width="0.9" height="0.9" fill="#A0C8FF"/><rect x="7.1000000000000005" y="8.5" width="0.9" height="0.9" fill="#A0C8FF"/><rect x="4.9" y="6.5" width="0.9" height="0.9" fill="#A0C8FF"/><rect x="6.6" y="6.5" width="0.9" height="0.9" fill="#A0C8FF"/><rect x="8.3" y="6.5" width="0.9" height="0.9" fill="#A0C8FF"/><path d="M7.5 11 L12 4.5 L13 5 L9 11.5 Z" fill="#808040"/><path d="M12 3.5 Q14 1 14.5 2 L13 4.5" fill="none" stroke="#101010" stroke-width="1.2"/><ellipse cx="6" cy="1.8" rx="2.6" ry="1.6" fill="#FFFFFF" stroke="#A0A0C0" stroke-width="0.5"/><rect x="5" y="3" width="2.5" height="1" fill="#101010"/><rect x="9.5" y="3.5" width="1" height="1.5" fill="#F01010"/><rect x="3" y="13" width="3" height="0.8" fill="#E08020"/></svg>
<svg style="left:211px;top:103px;" width="16" height="16" viewBox="0 0 16 16"><path d="M0 6 L3 3 L3 13 L0 14 Z" fill="#F08010"/><path d="M3 3 L4 2 L7 2 L7 12 L3 13 Z" fill="#F8D800"/><path d="M4 3 L7 3" stroke="#FFFFA0" stroke-width="0.8"/><path d="M0 8.5 L3 8 M0 11 L3 10.5 M3 6 L7 5.5 M3 9 L7 8.5" stroke="#FFE080" stroke-width="0.7"/><path d="M6 12 L6 8 Q6 6 8 6 L13 6 Q15 6 15 8 L15 12 Z" fill="#3A6AD8"/><path d="M6 10 L15 10 L15 12 L6 12 Z" fill="#0010A0" opacity="0.35"/><path d="M9 6 L10.5 8 L12 6 Z" fill="#FFFFFF"/><circle cx="10.5" cy="3.6" r="2.3" fill="#F8C8A0"/><path d="M8 4 Q8 1 10.5 1 Q13 1 13 4" fill="none" stroke="#6A0000" stroke-width="1.1"/><path d="M2 16 L2 12 Q2 10 4 10 L9 10 Q11 10 11 12 L11 16 Z" fill="#F01010"/><path d="M2 14 L11 14 L11 16 L2 16 Z" fill="#0010A0" opacity="0.35"/><path d="M5 10 L6.5 12 L8 10 Z" fill="#FFFFFF"/><circle cx="6.5" cy="7.6" r="2.3" fill="#F8C8A0"/><path d="M4 8 Q4 5 6.5 5 Q9 5 9 8" fill="none" stroke="#6A0000" stroke-width="1.1"/></svg>
<svg style="left:233px;top:103px;" width="16" height="16" viewBox="0 0 16 16"><path d="M0 4 L3 1 L3 11 L0 12 Z" fill="#F08010"/><path d="M3 1 L4 0 L7 0 L7 10 L3 11 Z" fill="#F8D800"/><path d="M4 1 L7 1" stroke="#FFFFA0" stroke-width="0.8"/><path d="M0 6.5 L3 6 M0 9 L3 8.5 M3 4 L7 3.5 M3 7 L7 6.5" stroke="#FFE080" stroke-width="0.7"/><path d="M6 13 L6 9 Q6 7 8 7 L13 7 Q15 7 15 9 L15 13 Z" fill="#1A3AF0"/><path d="M6 11 L15 11 L15 13 L6 13 Z" fill="#0010A0" opacity="0.35"/><path d="M9 7 L10.5 9 L12 7 Z" fill="#FFFFFF"/><circle cx="10.5" cy="4.6" r="2.3" fill="#F8C8A0"/><path d="M8 5 Q8 2 10.5 2 Q13 2 13 5" fill="none" stroke="#6A0000" stroke-width="1.1"/><path d="M0 10 L10 10 L8 15 L3 15 Z" fill="#FFFFFF" stroke="#404040" stroke-width="1.1"/><path d="M2 11.5 L9 11.5 M2.5 13.5 L8.5 13.5 M4 10 L4 15 M6 10 L6 15" stroke="#505050" stroke-width="0.8"/><path d="M8 10 L12 6" stroke="#404040" stroke-width="1.2"/></svg>
<svg style="left:256px;top:103px;" width="16" height="16" viewBox="0 0 16 16"><path d="M0 4 L3 1 L3 11 L0 12 Z" fill="#F08010"/><path d="M3 1 L4 0 L7 0 L7 10 L3 11 Z" fill="#F8D800"/><path d="M4 1 L7 1" stroke="#FFFFA0" stroke-width="0.8"/><path d="M0 6.5 L3 6 M0 9 L3 8.5 M3 4 L7 3.5 M3 7 L7 6.5" stroke="#FFE080" stroke-width="0.7"/><path d="M6 12 L6 8 Q6 6 8 6 L13 6 Q15 6 15 8 L15 12 Z" fill="#F01010"/><path d="M6 10 L15 10 L15 12 L6 12 Z" fill="#0010A0" opacity="0.35"/><path d="M9 6 L10.5 8 L12 6 Z" fill="#FFFFFF"/><circle cx="10.5" cy="3.6" r="2.3" fill="#F8C8A0"/><path d="M8 4 Q8 1 10.5 1 Q13 1 13 4" fill="none" stroke="#6A0000" stroke-width="1.1"/><path d="M2 10 L12 10 L10 15 L5 15 Z" fill="#FFFFFF" stroke="#404040" stroke-width="1.1"/><path d="M4 11.5 L11 11.5 M4.5 13.5 L10.5 13.5 M6 10 L6 15 M8 10 L8 15" stroke="#505050" stroke-width="0.8"/><path d="M10 10 L14 6" stroke="#404040" stroke-width="1.2"/></svg>
<svg style="left:279px;top:103px;" width="16" height="16" viewBox="0 0 16 16"><path d="M0 6 L3 3 L3 13 L0 14 Z" fill="#F08010"/><path d="M3 3 L4 2 L7 2 L7 12 L3 13 Z" fill="#F8D800"/><path d="M4 3 L7 3" stroke="#FFFFA0" stroke-width="0.8"/><path d="M0 8.5 L3 8 M0 11 L3 10.5 M3 6 L7 5.5 M3 9 L7 8.5" stroke="#FFE080" stroke-width="0.7"/><ellipse cx="10" cy="13.399999999999999" rx="2.9" ry="1.4" fill="#F0B800" stroke="#5A3000" stroke-width="0.8"/><rect x="8.2" y="12.7" width="3.6" height="0.9" fill="#FFF080"/><ellipse cx="10" cy="11.1" rx="2.9" ry="1.4" fill="#F0B800" stroke="#5A3000" stroke-width="0.8"/><rect x="8.2" y="10.4" width="3.6" height="0.9" fill="#FFF080"/><ellipse cx="10" cy="8.8" rx="2.9" ry="1.4" fill="#F0B800" stroke="#5A3000" stroke-width="0.8"/><rect x="8.2" y="8.1" width="3.6" height="0.9" fill="#FFF080"/><ellipse cx="10" cy="6.5" rx="2.9" ry="1.4" fill="#F0B800" stroke="#5A3000" stroke-width="0.8"/><rect x="8.2" y="5.8" width="3.6" height="0.9" fill="#FFF080"/></svg>
<svg style="left:302px;top:103px;" width="16" height="16" viewBox="0 0 16 16"><path d="M1 5 L4 2 L4 12 L1 13 Z" fill="#F08010"/><path d="M4 2 L5 1 L8 1 L8 11 L4 12 Z" fill="#F8D800"/><path d="M5 2 L8 2" stroke="#FFFFA0" stroke-width="0.8"/><path d="M1 7.5 L4 7 M1 10 L4 9.5 M4 5 L8 4.5 M4 8 L8 7.5" stroke="#FFE080" stroke-width="0.7"/><rect x="8" y="2" width="2" height="10" fill="#707070"/><rect x="8.5" y="3" width="0.8" height="8" fill="#FFFFFF"/><rect x="11" y="4" width="2" height="8" fill="#707070"/><rect x="11.5" y="5" width="0.8" height="6" fill="#FFFFFF"/><rect x="1" y="11" width="13" height="4.5" fill="#606060"/><rect x="2.5" y="12" width="1" height="2.5" fill="#F0F0F0"/><rect x="4.7" y="12" width="1" height="2.5" fill="#F0F0F0"/><rect x="6.9" y="12" width="1" height="2.5" fill="#F0F0F0"/><rect x="9.100000000000001" y="12" width="1" height="2.5" fill="#F0F0F0"/><rect x="11.3" y="12" width="1" height="2.5" fill="#F0F0F0"/></svg>
<svg style="left:325px;top:103px;" width="16" height="16" viewBox="0 0 16 16"><path d="M0 4 L3 1 L3 11 L0 12 Z" fill="#F08010"/><path d="M3 1 L4 0 L7 0 L7 10 L3 11 Z" fill="#F8D800"/><path d="M4 1 L7 1" stroke="#FFFFA0" stroke-width="0.8"/><path d="M0 6.5 L3 6 M0 9 L3 8.5 M3 4 L7 3.5 M3 7 L7 6.5" stroke="#FFE080" stroke-width="0.7"/><path d="M5 12 L6 10.5 L14 10.5 L14 14 L5 14 Z" fill="#D8D8E0"/><rect x="13" y="9.5" width="2.5" height="4.5" fill="#303030"/><rect x="7" y="12" width="1" height="1" fill="#404040"/><rect x="9" y="12" width="1" height="1" fill="#404040"/><rect x="11" y="12" width="1" height="1" fill="#404040"/></svg>
<svg style="left:348px;top:103px;" width="16" height="16" viewBox="0 0 16 16"><path d="M4.5 2.5 L13 8 L4.5 13.5 Z" fill="#40B028" stroke="#506050" stroke-width="0.8"/></svg>
<svg style="left:371px;top:103px;" width="16" height="16" viewBox="0 0 16 16"><path d="M0 5 L3 2 L3 12 L0 13 Z" fill="#F08010"/><path d="M3 2 L4 1 L7 1 L7 11 L3 12 Z" fill="#F8D800"/><path d="M4 2 L7 2" stroke="#FFFFA0" stroke-width="0.8"/><path d="M0 7.5 L3 7 M0 10 L3 9.5 M3 5 L7 4.5 M3 8 L7 7.5" stroke="#FFE080" stroke-width="0.7"/><ellipse cx="6" cy="13.399999999999999" rx="2.9" ry="1.4" fill="#F0B800" stroke="#5A3000" stroke-width="0.8"/><rect x="4.2" y="12.7" width="3.6" height="0.9" fill="#FFF080"/><ellipse cx="6" cy="11.1" rx="2.9" ry="1.4" fill="#F0B800" stroke="#5A3000" stroke-width="0.8"/><rect x="4.2" y="10.4" width="3.6" height="0.9" fill="#FFF080"/><ellipse cx="6" cy="8.8" rx="2.9" ry="1.4" fill="#F0B800" stroke="#5A3000" stroke-width="0.8"/><rect x="4.2" y="8.1" width="3.6" height="0.9" fill="#FFF080"/><ellipse cx="6" cy="6.5" rx="2.9" ry="1.4" fill="#F0B800" stroke="#5A3000" stroke-width="0.8"/><rect x="4.2" y="5.8" width="3.6" height="0.9" fill="#FFF080"/><ellipse cx="12" cy="13.5" rx="2.9" ry="1.4" fill="#F0B800" stroke="#5A3000" stroke-width="0.8"/><rect x="10.2" y="12.8" width="3.6" height="0.9" fill="#FFF080"/></svg>
<svg style="left:399px;top:103px;" width="16" height="16" viewBox="0 0 16 16"><path d="M0.5 0.5 L7.5 0.5 L10.5 3.5 L10.5 13.5 L0.5 13.5 Z" fill="#FFFFFF" stroke="#30A0E8"/><path d="M7.5 0.5 L7.5 3.5 L10.5 3.5" fill="#E8EEF6" stroke="#30A0E8"/><rect x="2" y="6" width="7" height="1" fill="#10C0F8"/><rect x="2" y="8" width="7" height="1" fill="#10C0F8"/><path d="M7 12 L7 8 Q7 6 9 6 L14 6 Q16 6 16 8 L16 12 Z" fill="#1A40F0"/><path d="M7 10 L16 10 L16 12 L7 12 Z" fill="#0010A0" opacity="0.35"/><path d="M10 6 L11.5 8 L13 6 Z" fill="#FFFFFF"/><circle cx="11.5" cy="3.6" r="2.3" fill="#F8C8A0"/><path d="M9 4 Q9 1 11.5 1 Q14 1 14 4" fill="none" stroke="#6A0000" stroke-width="1.1"/><path d="M2 10 L12 10 L10 15 L5 15 Z" fill="#FFFFFF" stroke="#404040" stroke-width="1.1"/><path d="M4 11.5 L11 11.5 M4.5 13.5 L10.5 13.5 M6 10 L6 15 M8 10 L8 15" stroke="#505050" stroke-width="0.8"/><path d="M10 10 L14 6" stroke="#404040" stroke-width="1.2"/></svg>
<svg style="left:422px;top:103px;" width="16" height="16" viewBox="0 0 16 16"><rect x="0" y="1" width="8" height="3.5" fill="#3A10D0"/><rect x="0" y="1" width="8" height="1" fill="#6AA0FF" opacity="0.8"/><rect x="8" y="0.5" width="2" height="3.5" fill="#001060"/><rect x="1.5" y="2.5" width="1.2" height="1.2" fill="#F8E000"/><rect x="3.7" y="2.5" width="1.2" height="1.2" fill="#F8E000"/><rect x="5.9" y="2.5" width="1.2" height="1.2" fill="#F8E000"/><path d="M3 5 L4.5 4 L8 7.5 L9.5 5 L10.5 5 L10.5 11.5 L4 11.5 L4 10.5 L6.5 9 Z" fill="#98E810" stroke="#1E4A00" stroke-width="0.9"/><rect x="9" y="10" width="5" height="5" fill="#F00000"/><path d="M9 10 L10 9 L15 9 L14 10 Z" fill="#FF6060"/><path d="M14 10 L15 9 L15 14 L14 15 Z" fill="#900000"/></svg>
<svg style="left:445px;top:103px;" width="16" height="16" viewBox="0 0 16 16"><path d="M0.5 0.5 L7.5 0.5 L10.5 3.5 L10.5 13.5 L0.5 13.5 Z" fill="#FFFFFF" stroke="#30A0E8"/><path d="M7.5 0.5 L7.5 3.5 L10.5 3.5" fill="#E8EEF6" stroke="#30A0E8"/><rect x="2" y="6" width="7" height="1" fill="#10C0F8"/><rect x="2" y="8" width="7" height="1" fill="#10C0F8"/><path d="M7 12 L7 8 Q7 6 9 6 L14 6 Q16 6 16 8 L16 12 Z" fill="#F01010"/><path d="M7 10 L16 10 L16 12 L7 12 Z" fill="#0010A0" opacity="0.35"/><path d="M10 6 L11.5 8 L13 6 Z" fill="#FFFFFF"/><circle cx="11.5" cy="3.6" r="2.3" fill="#F8C8A0"/><path d="M9 4 Q9 1 11.5 1 Q14 1 14 4" fill="none" stroke="#6A0000" stroke-width="1.1"/><path d="M2 10 L12 10 L10 15 L5 15 Z" fill="#FFFFFF" stroke="#404040" stroke-width="1.1"/><path d="M4 11.5 L11 11.5 M4.5 13.5 L10.5 13.5 M6 10 L6 15 M8 10 L8 15" stroke="#505050" stroke-width="0.8"/><path d="M10 10 L14 6" stroke="#404040" stroke-width="1.2"/></svg>
<svg style="left:468px;top:103px;" width="16" height="16" viewBox="0 0 16 16"><rect x="0" y="1" width="5" height="5" fill="#F00000"/><path d="M0 1 L1 0 L6 0 L5 1 Z" fill="#FF6060"/><path d="M5 1 L6 0 L6 5 L5 6 Z" fill="#900000"/><path d="M4 5 L5.5 4 L9 7.5 L10.5 5 L11.5 5 L11.5 11.5 L5 11.5 L5 10.5 L7.5 9 Z" fill="#98E810" stroke="#1E4A00" stroke-width="0.9"/><rect x="6" y="11" width="8" height="3.5" fill="#3A10D0"/><rect x="6" y="11" width="8" height="1" fill="#6AA0FF" opacity="0.8"/><rect x="14" y="10.5" width="2" height="3.5" fill="#001060"/><rect x="7.5" y="12.5" width="1.2" height="1.2" fill="#F8E000"/><rect x="9.7" y="12.5" width="1.2" height="1.2" fill="#F8E000"/><rect x="11.9" y="12.5" width="1.2" height="1.2" fill="#F8E000"/></svg>
<svg style="left:491px;top:103px;" width="16" height="16" viewBox="0 0 16 16"><rect x="0" y="1" width="5" height="5" fill="#F00000"/><path d="M0 1 L1 0 L6 0 L5 1 Z" fill="#FF6060"/><path d="M5 1 L6 0 L6 5 L5 6 Z" fill="#900000"/><path d="M4 5 L5.5 4 L9 7.5 L10.5 5 L11.5 5 L11.5 11.5 L5 11.5 L5 10.5 L7.5 9 Z" fill="#98E810" stroke="#1E4A00" stroke-width="0.9"/><rect x="7" y="11" width="9" height="4.5" fill="#2A70F8"/><rect x="8.5" y="12.5" width="1.2" height="2" fill="#fff"/><rect x="11" y="12.5" width="1.2" height="2" fill="#fff"/><rect x="13.5" y="12.5" width="1.2" height="2" fill="#fff"/></svg>
<svg style="left:514px;top:103px;" width="16" height="16" viewBox="0 0 16 16"><ellipse cx="4" cy="13.399999999999999" rx="2.9" ry="1.4" fill="#F0B800" stroke="#5A3000" stroke-width="0.8"/><rect x="2.2" y="12.7" width="3.6" height="0.9" fill="#FFF080"/><ellipse cx="4" cy="11.1" rx="2.9" ry="1.4" fill="#F0B800" stroke="#5A3000" stroke-width="0.8"/><rect x="2.2" y="10.4" width="3.6" height="0.9" fill="#FFF080"/><ellipse cx="4" cy="8.8" rx="2.9" ry="1.4" fill="#F0B800" stroke="#5A3000" stroke-width="0.8"/><rect x="2.2" y="8.1" width="3.6" height="0.9" fill="#FFF080"/><ellipse cx="4" cy="6.5" rx="2.9" ry="1.4" fill="#F0B800" stroke="#5A3000" stroke-width="0.8"/><rect x="2.2" y="5.8" width="3.6" height="0.9" fill="#FFF080"/><ellipse cx="12" cy="15.1" rx="2.9" ry="1.4" fill="#F0B800" stroke="#5A3000" stroke-width="0.8"/><rect x="10.2" y="14.4" width="3.6" height="0.9" fill="#FFF080"/><ellipse cx="12" cy="12.8" rx="2.9" ry="1.4" fill="#F0B800" stroke="#5A3000" stroke-width="0.8"/><rect x="10.2" y="12.100000000000001" width="3.6" height="0.9" fill="#FFF080"/><ellipse cx="12" cy="10.5" rx="2.9" ry="1.4" fill="#F0B800" stroke="#5A3000" stroke-width="0.8"/><rect x="10.2" y="9.8" width="3.6" height="0.9" fill="#FFF080"/><path d="M4 4 Q8 -1 12 4" fill="none" stroke="#2050A0" stroke-width="1.2"/><path d="M10 4 L13 5 L13 2" fill="#2050A0"/></svg>
<svg style="left:537px;top:103px;" width="16" height="16" viewBox="0 0 16 16"><path d="M1.5 0.5 L8.5 0.5 L11.5 3.5 L11.5 12.5 L1.5 12.5 Z" fill="#F0F0F0" stroke="#A0A0A0"/><path d="M8.5 0.5 L8.5 3.5 L11.5 3.5" fill="#E8EEF6" stroke="#A0A0A0"/><rect x="5" y="9" width="10" height="6" fill="#FFFFFF" stroke="#30A030" stroke-width="1.2"/><ellipse cx="10" cy="11.5" rx="2.9" ry="1.4" fill="#F0B800" stroke="#5A3000" stroke-width="0.8"/><rect x="8.2" y="10.8" width="3.6" height="0.9" fill="#FFF080"/></svg>
<svg style="left:560px;top:103px;" width="16" height="16" viewBox="0 0 16 16"><rect x="0" y="1" width="8" height="3.5" fill="#3A10D0"/><rect x="0" y="1" width="8" height="1" fill="#6AA0FF" opacity="0.8"/><rect x="8" y="0.5" width="2" height="3.5" fill="#001060"/><rect x="1.5" y="2.5" width="1.2" height="1.2" fill="#F8E000"/><rect x="3.7" y="2.5" width="1.2" height="1.2" fill="#F8E000"/><rect x="5.9" y="2.5" width="1.2" height="1.2" fill="#F8E000"/><path d="M3 5 L4.5 4 L8 7.5 L9.5 5 L10.5 5 L10.5 11.5 L4 11.5 L4 10.5 L6.5 9 Z" fill="#98E810" stroke="#1E4A00" stroke-width="0.9"/><rect x="6" y="11" width="8" height="3.5" fill="#F07020"/><rect x="6" y="11" width="8" height="1" fill="#6AA0FF" opacity="0.8"/><rect x="14" y="10.5" width="2" height="3.5" fill="#001060"/><rect x="7.5" y="12.5" width="1.2" height="1.2" fill="#FFD0A0"/><rect x="9.7" y="12.5" width="1.2" height="1.2" fill="#FFD0A0"/><rect x="11.9" y="12.5" width="1.2" height="1.2" fill="#FFD0A0"/></svg>
<svg style="left:583px;top:103px;" width="16" height="16" viewBox="0 0 16 16"><rect x="2" y="2" width="11" height="12" fill="#B0B0B0"/><path d="M0.5 0.5 L8.5 0.5 L11.5 3.5 L11.5 12.5 L0.5 12.5 Z" fill="#FFFFFF" stroke="#3098E8"/><path d="M8.5 0.5 L8.5 3.5 L11.5 3.5" fill="#E8EEF6" stroke="#3098E8"/><rect x="2" y="6" width="7" height="1" fill="#10C8F8"/><rect x="2" y="8" width="7" height="1" fill="#10C8F8"/><path d="M5 4 Q9 1 12 6" fill="none" stroke="#102860" stroke-width="1.1"/><path d="M10 5 L12.5 7 L13.5 4 Z" fill="#102860"/><ellipse cx="12" cy="15.1" rx="2.9" ry="1.4" fill="#F0B800" stroke="#5A3000" stroke-width="0.8"/><rect x="10.2" y="14.4" width="3.6" height="0.9" fill="#FFF080"/><ellipse cx="12" cy="12.8" rx="2.9" ry="1.4" fill="#F0B800" stroke="#5A3000" stroke-width="0.8"/><rect x="10.2" y="12.100000000000001" width="3.6" height="0.9" fill="#FFF080"/><ellipse cx="12" cy="10.5" rx="2.9" ry="1.4" fill="#F0B800" stroke="#5A3000" stroke-width="0.8"/><rect x="10.2" y="9.8" width="3.6" height="0.9" fill="#FFF080"/></svg>
<svg style="left:606px;top:103px;" width="16" height="16" viewBox="0 0 16 16"><rect x="6" y="3" width="11" height="12" fill="#B0B0B0"/><path d="M4.5 1.5 L12.5 1.5 L15.5 4.5 L15.5 13.5 L4.5 13.5 Z" fill="#FFFFFF" stroke="#3098E8"/><path d="M12.5 1.5 L12.5 4.5 L15.5 4.5" fill="#E8EEF6" stroke="#3098E8"/><rect x="6" y="7" width="7" height="1" fill="#10C8F8"/><rect x="6" y="9" width="7" height="1" fill="#10C8F8"/><ellipse cx="3" cy="3.8" rx="2.9" ry="1.4" fill="#F0B800" stroke="#5A3000" stroke-width="0.8"/><rect x="1.2" y="3.0999999999999996" width="3.6" height="0.9" fill="#FFF080"/><ellipse cx="3" cy="1.5" rx="2.9" ry="1.4" fill="#F0B800" stroke="#5A3000" stroke-width="0.8"/><rect x="1.2" y="0.8" width="3.6" height="0.9" fill="#FFF080"/><path d="M10 13 Q4 14 2 8" fill="none" stroke="#102860" stroke-width="1.1"/><path d="M0 9 L2 6.5 L4 9 Z" fill="#102860"/></svg>
<svg style="left:629px;top:103px;" width="16" height="16" viewBox="0 0 16 16"><path d="M3 15.5 L9 9 L9 5 L15 5 L15 15.5 Z" fill="#B8B8B8"/><path d="M9 5 L14 5 L14 15 L4 15 L9 10 Z" fill="#E8E8E8"/><ellipse cx="11" cy="13.1" rx="2.9" ry="1.4" fill="#F0B800" stroke="#5A3000" stroke-width="0.8"/><rect x="9.2" y="12.4" width="3.6" height="0.9" fill="#FFF080"/><ellipse cx="11" cy="10.8" rx="2.9" ry="1.4" fill="#F0B800" stroke="#5A3000" stroke-width="0.8"/><rect x="9.2" y="10.100000000000001" width="3.6" height="0.9" fill="#FFF080"/><ellipse cx="11" cy="8.5" rx="2.9" ry="1.4" fill="#F0B800" stroke="#5A3000" stroke-width="0.8"/><rect x="9.2" y="7.8" width="3.6" height="0.9" fill="#FFF080"/><path d="M3 0 L6 0 L6 3 L9 3 L9 6 L6 6 L6 9 L3 9 L3 6 L0 6 L0 3 L3 3 Z" fill="#20D020" stroke="#FFFFFF" stroke-width="0.8"/></svg>
<svg style="left:652px;top:103px;" width="16" height="16" viewBox="0 0 16 16"><path d="M3 15.5 L9 9 L9 5 L15 5 L15 15.5 Z" fill="#B8B8B8"/><path d="M9 5 L14 5 L14 15 L4 15 L9 10 Z" fill="#E8E8E8"/><ellipse cx="11" cy="13.1" rx="2.9" ry="1.4" fill="#F0B800" stroke="#5A3000" stroke-width="0.8"/><rect x="9.2" y="12.4" width="3.6" height="0.9" fill="#FFF080"/><ellipse cx="11" cy="10.8" rx="2.9" ry="1.4" fill="#F0B800" stroke="#5A3000" stroke-width="0.8"/><rect x="9.2" y="10.100000000000001" width="3.6" height="0.9" fill="#FFF080"/><ellipse cx="11" cy="8.5" rx="2.9" ry="1.4" fill="#F0B800" stroke="#5A3000" stroke-width="0.8"/><rect x="9.2" y="7.8" width="3.6" height="0.9" fill="#FFF080"/><rect x="0" y="3" width="9" height="3" fill="#20D020" stroke="#FFFFFF" stroke-width="0.8"/></svg>
<svg style="left:675px;top:103px;" width="16" height="16" viewBox="0 0 16 16"><rect x="3" y="2" width="11" height="12" fill="#B0B0B0"/><path d="M1.5 0.5 L9.5 0.5 L12.5 3.5 L12.5 12.5 L1.5 12.5 Z" fill="#FFFFFF" stroke="#3098E8"/><path d="M9.5 0.5 L9.5 3.5 L12.5 3.5" fill="#E8EEF6" stroke="#3098E8"/><rect x="3" y="6" width="5" height="1" fill="#10C8F8"/><rect x="3" y="8" width="5" height="1" fill="#10C8F8"/><path d="M7 8 L9.5 11 L15 5" fill="none" stroke="#10C010" stroke-width="2.6"/><ellipse cx="3" cy="13.8" rx="2.9" ry="1.4" fill="#F0B800" stroke="#5A3000" stroke-width="0.8"/><rect x="1.2" y="13.100000000000001" width="3.6" height="0.9" fill="#FFF080"/><ellipse cx="3" cy="11.5" rx="2.9" ry="1.4" fill="#F0B800" stroke="#5A3000" stroke-width="0.8"/><rect x="1.2" y="10.8" width="3.6" height="0.9" fill="#FFF080"/></svg>
<svg style="left:698px;top:103px;" width="16" height="16" viewBox="0 0 16 16"><path d="M1.5 0.5 L8.5 0.5 L11.5 3.5 L11.5 12.5 L1.5 12.5 Z" fill="#FFFFFF" stroke="#3098E8"/><path d="M8.5 0.5 L8.5 3.5 L11.5 3.5" fill="#E8EEF6" stroke="#3098E8"/><ellipse cx="6" cy="14.7" rx="2.9" ry="1.4" fill="#F0B800" stroke="#5A3000" stroke-width="0.8"/><rect x="4.2" y="14.0" width="3.6" height="0.9" fill="#FFF080"/><ellipse cx="6" cy="12.399999999999999" rx="2.9" ry="1.4" fill="#F0B800" stroke="#5A3000" stroke-width="0.8"/><rect x="4.2" y="11.7" width="3.6" height="0.9" fill="#FFF080"/><ellipse cx="6" cy="10.1" rx="2.9" ry="1.4" fill="#F0B800" stroke="#5A3000" stroke-width="0.8"/><rect x="4.2" y="9.4" width="3.6" height="0.9" fill="#FFF080"/><ellipse cx="6" cy="7.8" rx="2.9" ry="1.4" fill="#F0B800" stroke="#5A3000" stroke-width="0.8"/><rect x="4.2" y="7.1" width="3.6" height="0.9" fill="#FFF080"/><ellipse cx="6" cy="5.5" rx="2.9" ry="1.4" fill="#F0B800" stroke="#5A3000" stroke-width="0.8"/><rect x="4.2" y="4.8" width="3.6" height="0.9" fill="#FFF080"/><ellipse cx="13" cy="13.8" rx="2.9" ry="1.4" fill="#F0B800" stroke="#5A3000" stroke-width="0.8"/><rect x="11.2" y="13.100000000000001" width="3.6" height="0.9" fill="#FFF080"/><ellipse cx="13" cy="11.5" rx="2.9" ry="1.4" fill="#F0B800" stroke="#5A3000" stroke-width="0.8"/><rect x="11.2" y="10.8" width="3.6" height="0.9" fill="#FFF080"/></svg>
<svg style="left:721px;top:103px;" width="16" height="16" viewBox="0 0 16 16"><path d="M0.5 0.5 L8.5 0.5 L11.5 3.5 L11.5 12.5 L0.5 12.5 Z" fill="#FFFFFF" stroke="#3098E8"/><path d="M8.5 0.5 L8.5 3.5 L11.5 3.5" fill="#E8EEF6" stroke="#3098E8"/><rect x="2" y="6" width="6" height="1" fill="#10C8F8"/><rect x="2" y="8" width="6" height="1" fill="#10C8F8"/><path d="M8 15 L15 7" stroke="#30B030" stroke-width="1.6"/><circle cx="9" cy="9" r="1.5" fill="#30B030"/><circle cx="14" cy="14" r="1.5" fill="#30B030"/></svg>
<svg style="left:744px;top:103px;" width="16" height="16" viewBox="0 0 16 16"><path d="M0.5 0.5 L8.5 0.5 L11.5 3.5 L11.5 12.5 L0.5 12.5 Z" fill="#FFFFFF" stroke="#3098E8"/><path d="M8.5 0.5 L8.5 3.5 L11.5 3.5" fill="#E8EEF6" stroke="#3098E8"/><rect x="2" y="6" width="5" height="1" fill="#10C8F8"/><rect x="2" y="8" width="5" height="1" fill="#10C8F8"/><path d="M7 14 L7 10 Q7 8 9 8 L14 8 Q16 8 16 10 L16 14 Z" fill="#F01010"/><path d="M7 12 L16 12 L16 14 L7 14 Z" fill="#0010A0" opacity="0.35"/><path d="M10 8 L11.5 10 L13 8 Z" fill="#FFFFFF"/><circle cx="11.5" cy="5.6" r="2.3" fill="#F8C8A0"/><path d="M9 6 Q9 3 11.5 3 Q14 3 14 6" fill="none" stroke="#6A0000" stroke-width="1.1"/><path d="M2 16 L2 12 Q2 10 4 10 L9 10 Q11 10 11 12 L11 16 Z" fill="#1A40F0"/><path d="M2 14 L11 14 L11 16 L2 16 Z" fill="#0010A0" opacity="0.35"/><path d="M5 10 L6.5 12 L8 10 Z" fill="#FFFFFF"/><circle cx="6.5" cy="7.6" r="2.3" fill="#F8C8A0"/><path d="M4 8 Q4 5 6.5 5 Q9 5 9 8" fill="none" stroke="#6A0000" stroke-width="1.1"/></svg>
<svg style="left:767px;top:103px;" width="16" height="16" viewBox="0 0 16 16"><rect x="2.5" y="0.5" width="12" height="15" rx="2" fill="#30B040" stroke="#187020"/><rect x="4" y="2" width="9" height="12" rx="1" fill="#40C050"/><path d="M6 4 L6 12 L10 12 M6 8 L10 8 M6 4 L9 4" stroke="#185020" stroke-width="0.9" fill="none"/><rect x="9" y="3" width="2" height="2" fill="#A0E0A0"/><rect x="9" y="7" width="2" height="2" fill="#A0E0A0"/><rect x="9" y="11" width="2" height="2" fill="#A0E0A0"/></svg>
<svg style="left:814px;top:103px;" width="16" height="16" viewBox="0 0 16 16"><rect x="0.5" y="0.5" width="10" height="12" fill="#FFFFFF" stroke="#C8C8C8"/><path d="M8 0.5 L10.5 3" stroke="#B0B0B0" stroke-width="0.8"/><rect x="0" y="12.5" width="9" height="1.6" fill="#505050"/><path d="M7.5 4.3 L2.3 4.3 L5.2 7.5 L2.3 10.7 L7.5 10.7" fill="none" stroke="#202020" stroke-width="1.3"/><path d="M6 11 L6 7 Q6 5 8 5 L13 5 Q15 5 15 7 L15 11 Z" fill="#2A60D8"/><path d="M6 9 L15 9 L15 11 L6 11 Z" fill="#0010A0" opacity="0.35"/><path d="M9 5 L10.5 7 L12 5 Z" fill="#FFFFFF"/><circle cx="10.5" cy="2.6" r="2.3" fill="#F8C8A0"/><path d="M8 3 Q8 0 10.5 0 Q13 0 13 3" fill="none" stroke="#6A0000" stroke-width="1.1"/><rect x="8" y="10" width="5" height="5" fill="#E01010"/><path d="M8 10 L9 9 L14 9 L13 10 Z" fill="#FF6060"/><path d="M13 10 L14 9 L14 14 L13 15 Z" fill="#900000"/></svg>
<svg style="left:837px;top:103px;" width="16" height="16" viewBox="0 0 16 16"><rect x="0.5" y="0.5" width="10" height="12" fill="#FFFFFF" stroke="#C8C8C8"/><path d="M8 0.5 L10.5 3" stroke="#B0B0B0" stroke-width="0.8"/><rect x="0" y="12.5" width="9" height="1.6" fill="#505050"/><path d="M7.5 4.3 L2.3 4.3 L5.2 7.5 L2.3 10.7 L7.5 10.7" fill="none" stroke="#202020" stroke-width="1.3"/><path d="M6 11 L6 7 Q6 5 8 5 L13 5 Q15 5 15 7 L15 11 Z" fill="#E02020"/><path d="M6 9 L15 9 L15 11 L6 11 Z" fill="#A00000" opacity="0.35"/><path d="M9 5 L10.5 7 L12 5 Z" fill="#FFFFFF"/><circle cx="10.5" cy="2.6" r="2.3" fill="#F8C8A0"/><path d="M8 3 Q8 0 10.5 0 Q13 0 13 3" fill="none" stroke="#6A0000" stroke-width="1.1"/><rect x="8" y="10" width="5" height="5" fill="#2030C0"/><path d="M8 10 L9 9 L14 9 L13 10 Z" fill="#FF6060"/><path d="M13 10 L14 9 L14 14 L13 15 Z" fill="#900000"/></svg>
<svg style="left:860px;top:103px;" width="16" height="16" viewBox="0 0 16 16"><rect x="0.5" y="0.5" width="10" height="12" fill="#FFFFFF" stroke="#C8C8C8"/><path d="M8 0.5 L10.5 3" stroke="#B0B0B0" stroke-width="0.8"/><rect x="0" y="12.5" width="9" height="1.6" fill="#505050"/><path d="M7.5 4.3 L2.3 4.3 L5.2 7.5 L2.3 10.7 L7.5 10.7" fill="none" stroke="#202020" stroke-width="1.3"/><path d="M8 13 L8 9 Q8 7 10 7 L15 7 Q17 7 17 9 L17 13 Z" fill="#3A7AE0"/><path d="M8 11 L17 11 L17 13 L8 13 Z" fill="#0010A0" opacity="0.35"/><path d="M11 7 L12.5 9 L14 7 Z" fill="#FFFFFF"/><circle cx="12.5" cy="4.6" r="2.3" fill="#F8C8A0"/><path d="M10 5 Q10 2 12.5 2 Q15 2 15 5" fill="none" stroke="#6A0000" stroke-width="1.1"/><path d="M4 18 L4 14 Q4 12 6 12 L11 12 Q13 12 13 14 L13 18 Z" fill="#E02020"/><path d="M4 16 L13 16 L13 18 L4 18 Z" fill="#A00000" opacity="0.35"/><path d="M7 12 L8.5 14 L10 12 Z" fill="#FFFFFF"/><circle cx="8.5" cy="9.6" r="2.3" fill="#F8C8A0"/><path d="M6 10 Q6 7 8.5 7 Q11 7 11 10" fill="none" stroke="#6A0000" stroke-width="1.1"/></svg>
<svg style="left:883px;top:103px;" width="16" height="16" viewBox="0 0 16 16"><rect x="0.5" y="0.5" width="10" height="12" fill="#FFFFFF" stroke="#C8C8C8"/><path d="M8 0.5 L10.5 3" stroke="#B0B0B0" stroke-width="0.8"/><rect x="0" y="12.5" width="9" height="1.6" fill="#505050"/><path d="M7.5 4.3 L2.3 4.3 L5.2 7.5 L2.3 10.7 L7.5 10.7" fill="none" stroke="#202020" stroke-width="1.3"/><rect x="9" y="1" width="5" height="4" fill="#E01010"/><rect x="9" y="1" width="1" height="10" fill="#404040"/><rect x="6" y="11" width="8" height="3.5" fill="#2020A0"/><rect x="6" y="11" width="8" height="1" fill="#6AA0FF" opacity="0.8"/><rect x="14" y="10.5" width="2" height="3.5" fill="#001060"/><rect x="7.5" y="12.5" width="1.2" height="1.2" fill="#F8E000"/><rect x="9.7" y="12.5" width="1.2" height="1.2" fill="#F8E000"/><rect x="11.9" y="12.5" width="1.2" height="1.2" fill="#F8E000"/></svg>
<svg style="left:906px;top:103px;" width="16" height="16" viewBox="0 0 16 16"><rect x="0.5" y="0.5" width="10" height="12" fill="#FFFFFF" stroke="#C8C8C8"/><path d="M8 0.5 L10.5 3" stroke="#B0B0B0" stroke-width="0.8"/><rect x="0" y="12.5" width="9" height="1.6" fill="#505050"/><path d="M7.5 4.3 L2.3 4.3 L5.2 7.5 L2.3 10.7 L7.5 10.7" fill="none" stroke="#202020" stroke-width="1.3"/><rect x="9" y="0" width="5" height="4" fill="#E01010"/><rect x="9" y="0" width="1" height="10" fill="#404040"/><rect x="8" y="11" width="6" height="4" fill="#F0A030"/><rect x="10" y="12" width="2" height="2" fill="#602000"/></svg>
<svg style="left:929px;top:103px;" width="16" height="16" viewBox="0 0 16 16"><rect x="0.5" y="0.5" width="10" height="12" fill="#FFFFFF" stroke="#C8C8C8"/><path d="M8 0.5 L10.5 3" stroke="#B0B0B0" stroke-width="0.8"/><rect x="0" y="12.5" width="9" height="1.6" fill="#505050"/><path d="M7.5 4.3 L2.3 4.3 L5.2 7.5 L2.3 10.7 L7.5 10.7" fill="none" stroke="#202020" stroke-width="1.3"/><rect x="9" y="4" width="5" height="5" fill="#E01010"/><path d="M9 4 L10 3 L15 3 L14 4 Z" fill="#FF6060"/><path d="M14 4 L15 3 L15 8 L14 9 Z" fill="#900000"/><rect x="7" y="11" width="8" height="3.5" fill="#2A70E8"/><rect x="7" y="11" width="8" height="1" fill="#6AA0FF" opacity="0.8"/><rect x="15" y="10.5" width="2" height="3.5" fill="#001060"/><rect x="8.5" y="12.5" width="1.2" height="1.2" fill="#F8E000"/><rect x="10.7" y="12.5" width="1.2" height="1.2" fill="#F8E000"/><rect x="12.9" y="12.5" width="1.2" height="1.2" fill="#F8E000"/></svg>
<svg style="left:952px;top:103px;" width="16" height="16" viewBox="0 0 16 16"><rect x="0.5" y="0.5" width="10" height="12" fill="#FFFFFF" stroke="#C8C8C8"/><path d="M8 0.5 L10.5 3" stroke="#B0B0B0" stroke-width="0.8"/><rect x="0" y="12.5" width="9" height="1.6" fill="#505050"/><path d="M7.5 4.3 L2.3 4.3 L5.2 7.5 L2.3 10.7 L7.5 10.7" fill="none" stroke="#202020" stroke-width="1.3"/><rect x="7" y="5" width="7" height="10" fill="#E0E0E0" stroke="#606060" stroke-width="0.8"/><rect x="8" y="7" width="5" height="1" fill="#606060"/><rect x="8" y="9" width="5" height="1" fill="#606060"/><rect x="8" y="11" width="5" height="1" fill="#606060"/><rect x="8" y="13" width="5" height="1" fill="#606060"/></svg>
<svg style="left:975px;top:103px;" width="16" height="16" viewBox="0 0 16 16"><rect x="0.5" y="0.5" width="10" height="12" fill="#FFFFFF" stroke="#C8C8C8"/><path d="M8 0.5 L10.5 3" stroke="#B0B0B0" stroke-width="0.8"/><rect x="0" y="12.5" width="9" height="1.6" fill="#505050"/><path d="M7.5 4.3 L2.3 4.3 L5.2 7.5 L2.3 10.7 L7.5 10.7" fill="none" stroke="#202020" stroke-width="1.3"/><path d="M7 8 L9.5 11 L15 5" fill="none" stroke="#20B020" stroke-width="2.2"/></svg>
<div style="left:110px;top:100px;width:1px;height:22px;background:linear-gradient(rgba(190,178,130,0),#BEB282 25%,#BEB282 75%,rgba(190,178,130,0))"></div>
<div style="left:111px;top:100px;width:1px;height:22px;background:linear-gradient(rgba(255,255,255,0),#FFFFFF 25%,#FFFFFF 75%,rgba(255,255,255,0))"></div>
<div style="left:393px;top:100px;width:1px;height:22px;background:linear-gradient(rgba(190,178,130,0),#BEB282 25%,#BEB282 75%,rgba(190,178,130,0))"></div>
<div style="left:394px;top:100px;width:1px;height:22px;background:linear-gradient(rgba(255,255,255,0),#FFFFFF 25%,#FFFFFF 75%,rgba(255,255,255,0))"></div>
<svg style="left:185px;top:116px;" width="8" height="5" viewBox="0 0 8 5"><path d="M0 0 L7 0 L3.5 4 Z" fill="#3C2A00"/></svg>
<svg style="left:789px;top:116px;" width="8" height="5" viewBox="0 0 8 5"><path d="M0 0 L7 0 L3.5 4 Z" fill="#3C2A00"/></svg>
<svg style="left:997px;top:116px;" width="8" height="5" viewBox="0 0 8 5"><path d="M0 0 L7 0 L3.5 4 Z" fill="#3C2A00"/></svg>
<svg style="left:201px;top:104px;" width="4" height="13" viewBox="0 0 4 13"><rect x="0" y="0" width="3" height="1" fill="#A8A080"/><rect x="0" y="2" width="3" height="1" fill="#A8A080"/><rect x="0" y="4" width="3" height="1" fill="#A8A080"/><rect x="0" y="6" width="3" height="1" fill="#A8A080"/><rect x="0" y="8" width="3" height="1" fill="#A8A080"/><rect x="0" y="10" width="3" height="1" fill="#A8A080"/><rect x="0" y="12" width="3" height="1" fill="#A8A080"/></svg>
<svg style="left:805px;top:104px;" width="4" height="13" viewBox="0 0 4 13"><rect x="0" y="0" width="3" height="1" fill="#A8A080"/><rect x="0" y="2" width="3" height="1" fill="#A8A080"/><rect x="0" y="4" width="3" height="1" fill="#A8A080"/><rect x="0" y="6" width="3" height="1" fill="#A8A080"/><rect x="0" y="8" width="3" height="1" fill="#A8A080"/><rect x="0" y="10" width="3" height="1" fill="#A8A080"/><rect x="0" y="12" width="3" height="1" fill="#A8A080"/></svg>
<div style="left:8px;top:124px;width:1894px;height:2px;background:#4B4B4B;"></div>
<div style="left:8px;top:124px;width:2px;height:871px;background:#4B4B4B;"></div>
<div style="left:10px;top:126px;width:1892px;height:18px;background:#D2D2D2;"></div>
<div style="left:10px;top:144px;width:1892px;height:1px;background:#6A6A6A;"></div>
<svg style="left:13px;top:127px;" width="16" height="16" viewBox="0 0 16 16"><path d="M0.5 0.5 L8.5 0.5 L11.5 3.5 L11.5 13.5 L0.5 13.5 Z" fill="#FFFFFF" stroke="#7890A8"/><path d="M8.5 0.5 L8.5 3.5 L11.5 3.5" fill="#E0E8F0" stroke="#90A8C0"/><rect x="2" y="2" width="1" height="8" fill="#909090"/><rect x="4" y="4" width="2" height="6" fill="#F02010"/><rect x="7" y="5" width="2" height="5" fill="#20A010"/><rect x="2" y="9.5" width="9" height="1" fill="#808080"/><rect x="2" y="11.5" width="8" height="1" fill="#C0D0E0"/></svg>
<div class="t" style="left:31px;top:129px;font-size:12px;line-height:12px;color:#1E1E1E;font-weight:bold;">Планирование закупок</div>
<div style="left:1872px;top:138px;width:8px;height:2px;background:#1A1A1A;"></div>
<svg style="left:1889px;top:129px;" width="12" height="11" viewBox="0 0 12 11"><rect x="3.5" y="0.5" width="8" height="6" fill="none" stroke="#1A1A1A"/><rect x="3" y="0" width="9" height="2" fill="#1A1A1A"/><rect x="0.5" y="3.5" width="8" height="7" fill="#D2D2D2" stroke="#1A1A1A"/><rect x="0" y="3" width="9" height="2" fill="#1A1A1A"/></svg>
<div style="left:10px;top:145px;width:1892px;height:24px;background:#EDE6DD;"></div>
<div style="left:10px;top:169px;width:1892px;height:1px;background:#C9C19C;"></div>
<div class="t" style="left:15px;top:152px;font-size:12px;line-height:12px;color:#3C2A00;transform:scaleX(0.917);transform-origin:0 0;">Действия</div>
<svg style="left:68px;top:157px;" width="7" height="4" viewBox="0 0 7 4"><path d="M0 0 L7 0 L3.5 4 Z" fill="#3C2A00"/></svg>
<div style="left:78px;top:149px;width:1px;height:17px;background:linear-gradient(rgba(190,178,130,0),#BEB282 25%,#BEB282 75%,rgba(190,178,130,0))"></div>
<div style="left:79px;top:149px;width:1px;height:17px;background:linear-gradient(rgba(255,255,255,0),#FFFFFF 25%,#FFFFFF 75%,rgba(255,255,255,0))"></div>
<svg style="left:90px;top:151px;" width="8" height="13" viewBox="0 0 8 13"><path d="M0 0 L7 6.5 L0 13 Z" fill="#108A10"/></svg>
<div class="t" style="left:104px;top:153px;font-size:11px;line-height:11px;color:#3C2A00;font-weight:bold;letter-spacing:0.3px">Сформировать</div>
<div style="left:197px;top:149px;width:1px;height:17px;background:linear-gradient(rgba(190,178,130,0),#BEB282 25%,#BEB282 75%,rgba(190,178,130,0))"></div>
<div style="left:198px;top:149px;width:1px;height:17px;background:linear-gradient(rgba(255,255,255,0),#FFFFFF 25%,#FFFFFF 75%,rgba(255,255,255,0))"></div>
<div class="t" style="left:206px;top:152px;font-size:12px;line-height:12px;color:#3C2A00;transform:scaleX(0.917);transform-origin:0 0;">Сформировать заказ</div>
<div style="left:321px;top:149px;width:1px;height:17px;background:linear-gradient(rgba(190,178,130,0),#BEB282 25%,#BEB282 75%,rgba(190,178,130,0))"></div>
<div style="left:322px;top:149px;width:1px;height:17px;background:linear-gradient(rgba(255,255,255,0),#FFFFFF 25%,#FFFFFF 75%,rgba(255,255,255,0))"></div>
<div class="t" style="left:329px;top:152px;font-size:12px;line-height:12px;color:#3C2A00;transform:scaleX(0.917);transform-origin:0 0;">Формирование внутренних заказов...</div>
<div style="left:527px;top:149px;width:1px;height:17px;background:linear-gradient(rgba(190,178,130,0),#BEB282 25%,#BEB282 75%,rgba(190,178,130,0))"></div>
<div style="left:528px;top:149px;width:1px;height:17px;background:linear-gradient(rgba(255,255,255,0),#FFFFFF 25%,#FFFFFF 75%,rgba(255,255,255,0))"></div>
<svg style="left:534px;top:149px;" width="16" height="16" viewBox="0 0 16 16"><rect x="3.5" y="0.5" width="9" height="12" rx="1" fill="#FFFFFF" stroke="#7890A8"/><rect x="5" y="2.5" width="6" height="1" fill="#A8B4C4"/><rect x="5" y="4.5" width="6" height="1" fill="#A8B4C4"/><rect x="5" y="6.5" width="6" height="1" fill="#A8B4C4"/><rect x="5" y="8.5" width="6" height="1" fill="#A8B4C4"/><path d="M0.5 4.5 L6 4.5 L4.5 6 Q6 9 9 9.5 Q5 10.5 3 7.5 L0.5 10 Z" fill="#209020" stroke="#107010" stroke-width="0.5"/><path d="M5 15.5 L9.5 9.5 L14.5 15.5 Z" fill="#F0C830" stroke="#C09000" stroke-width="0.6"/></svg>
<svg style="left:557px;top:149px;" width="16" height="16" viewBox="0 0 16 16"><rect x="2.5" y="0.5" width="9" height="12" rx="1" fill="#FFFFFF" stroke="#7890A8"/><rect x="4" y="2.5" width="6" height="1" fill="#A8B4C4"/><rect x="4" y="4.5" width="6" height="1" fill="#A8B4C4"/><rect x="4" y="6.5" width="6" height="1" fill="#A8B4C4"/><rect x="4" y="8.5" width="6" height="1" fill="#A8B4C4"/><path d="M15.5 11.5 L10 11.5 L11.5 10 Q10 7 12.5 3 Q12 7 13.5 8.5 L15.5 6 Z" fill="#209020" stroke="#107010" stroke-width="0.5"/><path d="M1.5 15.5 L6 9.5 L10.5 15.5 Z" fill="#F0C830" stroke="#C09000" stroke-width="0.6"/></svg>
<div style="left:578px;top:149px;width:1px;height:17px;background:linear-gradient(rgba(190,178,130,0),#BEB282 25%,#BEB282 75%,rgba(190,178,130,0))"></div>
<div style="left:579px;top:149px;width:1px;height:17px;background:linear-gradient(rgba(255,255,255,0),#FFFFFF 25%,#FFFFFF 75%,rgba(255,255,255,0))"></div>
<svg style="left:585px;top:149px;" width="16" height="16" viewBox="0 0 16 16"><circle cx="8" cy="8" r="7" fill="#F4B860" stroke="#8A8A98"/><circle cx="7" cy="6" r="5" fill="#FCE0A8" opacity="0.6"/><text x="8" y="12" font-family="Liberation Sans" font-size="10" font-weight="bold" text-anchor="middle" fill="#6A3A10">?</text></svg>
<div style="left:10px;top:170px;width:1892px;height:825px;background:#FDFAF4;"></div>
<div style="left:18px;top:196px;width:1884px;height:1px;background:#B8AE84;"></div>
<div style="left:18px;top:196px;width:1px;height:296px;background:#B8AE84;"></div>
<div style="left:18px;top:491px;width:1884px;height:1px;background:#B8AE84;"></div>
<div style="left:18px;top:180px;width:72px;height:16px;background:#F4F0E4;"></div>
<div style="left:18px;top:180px;width:72px;height:1px;background:#FBF4D4;"></div>
<div style="left:133px;top:180px;width:127px;height:16px;background:#F4F0E4;"></div>
<div style="left:133px;top:180px;width:127px;height:1px;background:#FBF4D4;"></div>
<div style="left:260px;top:180px;width:73px;height:16px;background:#F4F0E4;"></div>
<div style="left:260px;top:180px;width:73px;height:1px;background:#FBF4D4;"></div>
<div style="left:18px;top:181px;width:1px;height:15px;background:#FBF4D4;"></div>
<div style="left:259px;top:181px;width:1px;height:15px;background:#FBF4D4;"></div>
<div style="left:332px;top:181px;width:1px;height:15px;background:#FBF4D4;"></div>
<div style="left:90px;top:179px;width:42px;height:18px;background:#FDFAF4;"></div>
<div style="left:90px;top:178px;width:42px;height:1px;background:#B8AE84;"></div>
<div style="left:89px;top:179px;width:1px;height:18px;background:#B8AE84;"></div>
<div style="left:132px;top:179px;width:1px;height:18px;background:#B8AE84;"></div>
<div class="t" style="left:25px;top:183px;font-size:12px;line-height:12px;color:#3C2A00;transform:scaleX(0.917);transform-origin:0 0;">Параметры</div>
<div class="t" style="left:96px;top:183px;font-size:12px;line-height:12px;color:#3C2A00;transform:scaleX(0.917);transform-origin:0 0;">Отбор</div>
<div class="t" style="left:139px;top:183px;font-size:12px;line-height:12px;color:#3C2A00;transform:scaleX(0.917);transform-origin:0 0;">Дополнительные поля</div>
<div class="t" style="left:266px;top:183px;font-size:12px;line-height:12px;color:#3C2A00;transform:scaleX(0.917);transform-origin:0 0;">Показатели</div>
<svg style="left:29px;top:207px;" width="16" height="16" viewBox="0 0 16 16"><circle cx="7.7" cy="8" r="7.2" fill="url(#gAdd)" stroke="#6A8A68" stroke-width="0.8"/><path d="M7.7 4 L7.7 12 M3.7 8 L11.7 8" stroke="#FFFFFF" stroke-width="2.4"/></svg>
<svg style="left:52px;top:207px;" width="16" height="16" viewBox="0 0 16 16"><path d="M3 4 L12 13 M12 4 L3 13" stroke="#E85050" stroke-width="2.6" stroke-linecap="round"/><path d="M3 4 L12 13 M12 4 L3 13" stroke="#F8A0A0" stroke-width="0.8"/></svg>
<svg style="left:75px;top:207px;" width="16" height="16" viewBox="0 0 16 16"><rect x="5.5" y="0.5" width="10" height="10" rx="1" fill="#F4F8FC" stroke="#5A88B8"/><rect x="3.5" y="2.5" width="10" height="10" rx="1" fill="#F4F8FC" stroke="#5A88B8"/><rect x="1.5" y="4.5" width="10" height="10" rx="1" fill="#FFFFFF" stroke="#5A88B8"/><rect x="2.5" y="5.5" width="8" height="5" fill="url(#gBox)"/><path d="M2.5 10 L5.5 13 L10.5 7" fill="none" stroke="#30A820" stroke-width="2.4"/></svg>
<svg style="left:98px;top:207px;" width="16" height="16" viewBox="0 0 16 16"><rect x="5.5" y="0.5" width="10" height="10" rx="1" fill="#F4F8FC" stroke="#5A88B8"/><rect x="3.5" y="2.5" width="10" height="10" rx="1" fill="#F4F8FC" stroke="#5A88B8"/><rect x="1.5" y="4.5" width="10" height="10" rx="1" fill="#FFFFFF" stroke="#5A88B8"/><rect x="2.5" y="5.5" width="8" height="5" fill="url(#gBox)"/></svg>
<div style="left:26px;top:228px;width:1876px;height:256px;background:#FFFFFF;"></div>
<div style="left:26px;top:228px;width:848px;height:20px;background:#F6F1E0;"></div>
<div style="left:875px;top:228px;width:1027px;height:20px;background:#D1CFB5;"></div>
<div style="left:25px;top:227px;width:1877px;height:1px;background:#BDB38D;"></div>
<div style="left:25px;top:227px;width:1px;height:258px;background:#BDB38D;"></div>
<div style="left:25px;top:484px;width:1877px;height:1px;background:#BDB38D;"></div>
<div style="left:25px;top:248px;width:1877px;height:1px;background:#BDB38D;"></div>
<div style="left:25px;top:267px;width:1877px;height:1px;background:#BDB38D;"></div>
<div style="left:25px;top:286px;width:1877px;height:1px;background:#BDB38D;"></div>
<div style="left:47px;top:227px;width:1px;height:60px;background:#BDB38D;"></div>
<div style="left:564px;top:227px;width:1px;height:60px;background:#BDB38D;"></div>
<div style="left:874px;top:227px;width:1px;height:60px;background:#BDB38D;"></div>
<div class="t" style="left:52px;top:232px;font-size:12px;line-height:12px;color:#3C2A00;transform:scaleX(0.917);transform-origin:0 0;">Поле</div>
<div class="t" style="left:570px;top:232px;font-size:12px;line-height:12px;color:#3C2A00;transform:scaleX(0.917);transform-origin:0 0;">Тип сравнения</div>
<div class="t" style="left:879px;top:232px;font-size:12px;line-height:12px;color:#3C2A00;transform:scaleX(0.917);transform-origin:0 0;">Значение</div>
<div style="left:30px;top:252px;width:13px;height:13px;border:1px solid #B8AE84;background:#FFFFFF;box-sizing:border-box"></div>
<svg style="left:30px;top:252px;" width="13" height="13" viewBox="0 0 13 13"><path d="M3 6 L5 9 L10 3" fill="none" stroke="#000" stroke-width="1.8"/></svg>
<div style="left:30px;top:271px;width:13px;height:13px;border:1px solid #B8AE84;background:#FFFFFF;box-sizing:border-box"></div>
<svg style="left:30px;top:271px;" width="13" height="13" viewBox="0 0 13 13"><path d="M3 6 L5 9 L10 3" fill="none" stroke="#000" stroke-width="1.8"/></svg>
<div class="t" style="left:52px;top:253px;font-size:12px;line-height:12px;color:#000;transform:scaleX(0.917);transform-origin:0 0;">Номенклатура.Основной поставщик</div>
<div class="t" style="left:570px;top:253px;font-size:12px;line-height:12px;color:#000;transform:scaleX(0.917);transform-origin:0 0;">Равно</div>
<div class="t" style="left:879px;top:253px;font-size:12px;line-height:12px;color:#000;transform:scaleX(0.917);transform-origin:0 0;">Кармин-Авто ООО (НОВЫЙ)</div>
<div style="left:875px;top:268px;width:1027px;height:18px;background:#5267C5;"></div>
<div class="t" style="left:52px;top:272px;font-size:12px;line-height:12px;color:#000;transform:scaleX(0.917);transform-origin:0 0;">Склад</div>
<div class="t" style="left:570px;top:272px;font-size:12px;line-height:12px;color:#000;transform:scaleX(0.917);transform-origin:0 0;">Равно</div>
<div class="t" style="left:879px;top:272px;font-size:12px;line-height:12px;color:#FFFFFF;transform:scaleX(0.917);transform-origin:0 0;">Сургут</div>
<div style="left:18px;top:498px;width:1884px;height:1px;background:#BFB795;"></div>
<div style="left:18px;top:498px;width:1px;height:497px;background:#BFB795;"></div>
<div style="left:1901px;top:498px;width:1px;height:497px;background:#BFB795;"></div>
<div style="left:19px;top:499px;width:1882px;height:496px;background:#FFFFFF;"></div>
<div style="left:33px;top:550px;width:1504px;height:43px;background:#EFE7DD;"></div>
<div style="left:32px;top:549px;width:1506px;height:1px;background:#BFB795;"></div>
<div style="left:277px;top:564px;width:1261px;height:1px;background:#BFB795;"></div>
<div style="left:18px;top:593px;width:1883px;height:1px;background:#BFB795;"></div>
<div style="left:32px;top:549px;width:1px;height:45px;background:#BFB795;"></div>
<div style="left:277px;top:549px;width:1px;height:45px;background:#BFB795;"></div>
<div style="left:907px;top:549px;width:1px;height:45px;background:#BFB795;"></div>
<div style="left:1537px;top:549px;width:1px;height:45px;background:#BFB795;"></div>
<div style="left:382px;top:564px;width:1px;height:30px;background:#BFB795;"></div>
<div style="left:487px;top:564px;width:1px;height:30px;background:#BFB795;"></div>
<div style="left:592px;top:564px;width:1px;height:30px;background:#BFB795;"></div>
<div style="left:697px;top:564px;width:1px;height:30px;background:#BFB795;"></div>
<div style="left:802px;top:564px;width:1px;height:30px;background:#BFB795;"></div>
<div style="left:1012px;top:564px;width:1px;height:30px;background:#BFB795;"></div>
<div style="left:1117px;top:564px;width:1px;height:30px;background:#BFB795;"></div>
<div style="left:1222px;top:564px;width:1px;height:30px;background:#BFB795;"></div>
<div style="left:1327px;top:564px;width:1px;height:30px;background:#BFB795;"></div>
<div style="left:1432px;top:564px;width:1px;height:30px;background:#BFB795;"></div>
<div class="t" style="left:36px;top:551px;font-size:14px;line-height:14px;color:#402C00;font-weight:bold;transform:scaleX(0.93);transform-origin:0 0;">Номенклатура</div>
<div class="t" style="left:280px;top:552px;font-size:11px;line-height:11px;color:#402C00;font-weight:bold;">Сургут</div>
<div class="t" style="left:910px;top:552px;font-size:11px;line-height:11px;color:#402C00;font-weight:bold;">Итог</div>
<div class="t" style="left:280px;top:567px;font-size:11px;line-height:11px;color:#402C00;font-weight:bold;">Продано</div>
<div class="t" style="left:385px;top:567px;font-size:11px;line-height:11px;color:#402C00;font-weight:bold;">Дней</div>
<div class="t" style="left:385px;top:581px;font-size:11px;line-height:11px;color:#402C00;font-weight:bold;">продажи</div>
<div class="t" style="left:490px;top:567px;font-size:11px;line-height:11px;color:#402C00;font-weight:bold;">Средняя продажа</div>
<div class="t" style="left:490px;top:581px;font-size:11px;line-height:11px;color:#402C00;font-weight:bold;">за день</div>
<div class="t" style="left:595px;top:567px;font-size:11px;line-height:11px;color:#402C00;font-weight:bold;">Остаток на дату</div>
<div class="t" style="left:595px;top:581px;font-size:11px;line-height:11px;color:#402C00;font-weight:bold;">начала закупок</div>
<div class="t" style="left:700px;top:567px;font-size:11px;line-height:11px;color:#402C00;font-weight:bold;">Необходимый</div>
<div class="t" style="left:700px;top:581px;font-size:11px;line-height:11px;color:#402C00;font-weight:bold;">объем закупки</div>
<div class="t" style="left:805px;top:567px;font-size:11px;line-height:11px;color:#402C00;font-weight:bold;">Планируемый</div>
<div class="t" style="left:805px;top:581px;font-size:11px;line-height:11px;color:#402C00;font-weight:bold;">объем продаж</div>
<div class="t" style="left:910px;top:567px;font-size:11px;line-height:11px;color:#402C00;font-weight:bold;">Продано</div>
<div class="t" style="left:1015px;top:567px;font-size:11px;line-height:11px;color:#402C00;font-weight:bold;">Дней</div>
<div class="t" style="left:1015px;top:581px;font-size:11px;line-height:11px;color:#402C00;font-weight:bold;">продажи</div>
<div class="t" style="left:1120px;top:567px;font-size:11px;line-height:11px;color:#402C00;font-weight:bold;">Средняя продажа</div>
<div class="t" style="left:1120px;top:581px;font-size:11px;line-height:11px;color:#402C00;font-weight:bold;">за день</div>
<div class="t" style="left:1225px;top:567px;font-size:11px;line-height:11px;color:#402C00;font-weight:bold;">Остаток на дату</div>
<div class="t" style="left:1225px;top:581px;font-size:11px;line-height:11px;color:#402C00;font-weight:bold;">начала закупок</div>
<div class="t" style="left:1330px;top:567px;font-size:11px;line-height:11px;color:#402C00;font-weight:bold;">Необходимый</div>
<div class="t" style="left:1330px;top:581px;font-size:11px;line-height:11px;color:#402C00;font-weight:bold;">объем закупки</div>
<div class="t" style="left:1435px;top:567px;font-size:11px;line-height:11px;color:#402C00;font-weight:bold;">Планируемый</div>
<div class="t" style="left:1435px;top:581px;font-size:11px;line-height:11px;color:#402C00;font-weight:bold;">объем продаж</div>
<div style="left:32px;top:622px;width:1506px;height:1px;background:#BFB795;"></div>
<div style="left:32px;top:593px;width:1px;height:30px;background:#BFB795;"></div>
<div style="left:277px;top:593px;width:1px;height:30px;background:#BFB795;"></div>
<div style="left:382px;top:593px;width:1px;height:30px;background:#BFB795;"></div>
<div style="left:487px;top:593px;width:1px;height:30px;background:#BFB795;"></div>
<div style="left:592px;top:593px;width:1px;height:30px;background:#BFB795;"></div>
<div style="left:697px;top:593px;width:1px;height:30px;background:#BFB795;"></div>
<div style="left:802px;top:593px;width:1px;height:30px;background:#BFB795;"></div>
<div style="left:907px;top:593px;width:1px;height:30px;background:#BFB795;"></div>
<div style="left:1012px;top:593px;width:1px;height:30px;background:#BFB795;"></div>
<div style="left:1117px;top:593px;width:1px;height:30px;background:#BFB795;"></div>
<div style="left:1222px;top:593px;width:1px;height:30px;background:#BFB795;"></div>
<div style="left:1327px;top:593px;width:1px;height:30px;background:#BFB795;"></div>
<div style="left:1432px;top:593px;width:1px;height:30px;background:#BFB795;"></div>
<div style="left:1537px;top:593px;width:1px;height:30px;background:#BFB795;"></div>
<div class="t" style="left:35px;top:596px;font-size:11px;line-height:11px;color:#000;font-weight:bold;transform:scaleX(0.99);transform-origin:0 0;">Амортизатор 267-382 20x58/16x58 0/0</div>
<div class="t" style="left:35px;top:610px;font-size:11px;line-height:11px;color:#000;font-weight:bold;transform:scaleX(0.99);transform-origin:0 0;">SCHMITZ (91-9522S) /AL-KO (9562)</div>
<div class="t" style="right:1436px;top:596px;font-size:11px;line-height:11px;color:#000;text-align:right;">129</div>
<div class="t" style="right:806px;top:596px;font-size:11px;line-height:11px;color:#000;text-align:right;font-weight:bold;">129</div>
<div class="t" style="right:1226px;top:596px;font-size:11px;line-height:11px;color:#000;text-align:right;">2</div>
<div class="t" style="right:596px;top:596px;font-size:11px;line-height:11px;color:#000;text-align:right;font-weight:bold;">2</div>
<div style="left:32px;top:651px;width:1506px;height:1px;background:#BFB795;"></div>
<div style="left:32px;top:622px;width:1px;height:30px;background:#BFB795;"></div>
<div style="left:277px;top:622px;width:1px;height:30px;background:#BFB795;"></div>
<div style="left:382px;top:622px;width:1px;height:30px;background:#BFB795;"></div>
<div style="left:487px;top:622px;width:1px;height:30px;background:#BFB795;"></div>
<div style="left:592px;top:622px;width:1px;height:30px;background:#BFB795;"></div>
<div style="left:697px;top:622px;width:1px;height:30px;background:#BFB795;"></div>
<div style="left:802px;top:622px;width:1px;height:30px;background:#BFB795;"></div>
<div style="left:907px;top:622px;width:1px;height:30px;background:#BFB795;"></div>
<div style="left:1012px;top:622px;width:1px;height:30px;background:#BFB795;"></div>
<div style="left:1117px;top:622px;width:1px;height:30px;background:#BFB795;"></div>
<div style="left:1222px;top:622px;width:1px;height:30px;background:#BFB795;"></div>
<div style="left:1327px;top:622px;width:1px;height:30px;background:#BFB795;"></div>
<div style="left:1432px;top:622px;width:1px;height:30px;background:#BFB795;"></div>
<div style="left:1537px;top:622px;width:1px;height:30px;background:#BFB795;"></div>
<div class="t" style="left:35px;top:625px;font-size:11px;line-height:11px;color:#000;font-weight:bold;transform:scaleX(0.99);transform-origin:0 0;">Амортизатор 267-383 16x58/16x80 0/0</div>
<div class="t" style="left:35px;top:639px;font-size:11px;line-height:11px;color:#000;font-weight:bold;transform:scaleX(0.99);transform-origin:0 0;">SCHMITZ (1093977) АНАЛОГ 9972</div>
<div class="t" style="right:1436px;top:625px;font-size:11px;line-height:11px;color:#000;text-align:right;">129</div>
<div class="t" style="right:806px;top:625px;font-size:11px;line-height:11px;color:#000;text-align:right;font-weight:bold;">129</div>
<div class="t" style="right:1226px;top:625px;font-size:11px;line-height:11px;color:#000;text-align:right;">1</div>
<div class="t" style="right:596px;top:625px;font-size:11px;line-height:11px;color:#000;text-align:right;font-weight:bold;">1</div>
<div style="left:32px;top:680px;width:1506px;height:1px;background:#BFB795;"></div>
<div style="left:32px;top:651px;width:1px;height:30px;background:#BFB795;"></div>
<div style="left:277px;top:651px;width:1px;height:30px;background:#BFB795;"></div>
<div style="left:382px;top:651px;width:1px;height:30px;background:#BFB795;"></div>
<div style="left:487px;top:651px;width:1px;height:30px;background:#BFB795;"></div>
<div style="left:592px;top:651px;width:1px;height:30px;background:#BFB795;"></div>
<div style="left:697px;top:651px;width:1px;height:30px;background:#BFB795;"></div>
<div style="left:802px;top:651px;width:1px;height:30px;background:#BFB795;"></div>
<div style="left:907px;top:651px;width:1px;height:30px;background:#BFB795;"></div>
<div style="left:1012px;top:651px;width:1px;height:30px;background:#BFB795;"></div>
<div style="left:1117px;top:651px;width:1px;height:30px;background:#BFB795;"></div>
<div style="left:1222px;top:651px;width:1px;height:30px;background:#BFB795;"></div>
<div style="left:1327px;top:651px;width:1px;height:30px;background:#BFB795;"></div>
<div style="left:1432px;top:651px;width:1px;height:30px;background:#BFB795;"></div>
<div style="left:1537px;top:651px;width:1px;height:30px;background:#BFB795;"></div>
<div class="t" style="left:35px;top:654px;font-size:11px;line-height:11px;color:#000;font-weight:bold;transform:scaleX(0.99);transform-origin:0 0;">Амортизатор 268-379 20x68/20x68 0/0 ROR</div>
<div class="t" style="left:35px;top:668px;font-size:11px;line-height:11px;color:#000;font-weight:bold;transform:scaleX(0.99);transform-origin:0 0;">(21229934) / AL-KO (0356)</div>
<div class="t" style="right:1436px;top:654px;font-size:11px;line-height:11px;color:#000;text-align:right;">129</div>
<div class="t" style="right:806px;top:654px;font-size:11px;line-height:11px;color:#000;text-align:right;font-weight:bold;">129</div>
<div class="t" style="right:1226px;top:654px;font-size:11px;line-height:11px;color:#000;text-align:right;">2</div>
<div class="t" style="right:596px;top:654px;font-size:11px;line-height:11px;color:#000;text-align:right;font-weight:bold;">2</div>
<div style="left:32px;top:709px;width:1506px;height:1px;background:#BFB795;"></div>
<div style="left:32px;top:680px;width:1px;height:30px;background:#BFB795;"></div>
<div style="left:277px;top:680px;width:1px;height:30px;background:#BFB795;"></div>
<div style="left:382px;top:680px;width:1px;height:30px;background:#BFB795;"></div>
<div style="left:487px;top:680px;width:1px;height:30px;background:#BFB795;"></div>
<div style="left:592px;top:680px;width:1px;height:30px;background:#BFB795;"></div>
<div style="left:697px;top:680px;width:1px;height:30px;background:#BFB795;"></div>
<div style="left:802px;top:680px;width:1px;height:30px;background:#BFB795;"></div>
<div style="left:907px;top:680px;width:1px;height:30px;background:#BFB795;"></div>
<div style="left:1012px;top:680px;width:1px;height:30px;background:#BFB795;"></div>
<div style="left:1117px;top:680px;width:1px;height:30px;background:#BFB795;"></div>
<div style="left:1222px;top:680px;width:1px;height:30px;background:#BFB795;"></div>
<div style="left:1327px;top:680px;width:1px;height:30px;background:#BFB795;"></div>
<div style="left:1432px;top:680px;width:1px;height:30px;background:#BFB795;"></div>
<div style="left:1537px;top:680px;width:1px;height:30px;background:#BFB795;"></div>
<div class="t" style="left:35px;top:683px;font-size:11px;line-height:11px;color:#000;font-weight:bold;transform:scaleX(0.99);transform-origin:0 0;">Амортизатор 271-380 16x58/16x58 0/0</div>
<div class="t" style="left:35px;top:697px;font-size:11px;line-height:11px;color:#000;font-weight:bold;transform:scaleX(0.99);transform-origin:0 0;">SCHMITZ (016508) / RSB60318</div>
<div class="t" style="right:1541px;top:683px;font-size:11px;line-height:11px;color:#000;text-align:right;">2</div>
<div class="t" style="right:911px;top:683px;font-size:11px;line-height:11px;color:#000;text-align:right;font-weight:bold;">2</div>
<div class="t" style="right:1436px;top:683px;font-size:11px;line-height:11px;color:#000;text-align:right;">129</div>
<div class="t" style="right:806px;top:683px;font-size:11px;line-height:11px;color:#000;text-align:right;font-weight:bold;">129</div>
<div class="t" style="right:1331px;top:683px;font-size:11px;line-height:11px;color:#000;text-align:right;">0,016</div>
<div class="t" style="right:701px;top:683px;font-size:11px;line-height:11px;color:#000;text-align:right;font-weight:bold;">0,016</div>
<div class="t" style="right:1226px;top:683px;font-size:11px;line-height:11px;color:#000;text-align:right;">29</div>
<div class="t" style="right:596px;top:683px;font-size:11px;line-height:11px;color:#000;text-align:right;font-weight:bold;">29</div>
<div class="t" style="right:1016px;top:683px;font-size:11px;line-height:11px;color:#000;text-align:right;">0,093</div>
<div class="t" style="right:386px;top:683px;font-size:11px;line-height:11px;color:#000;text-align:right;font-weight:bold;">0,093</div>
<div style="left:32px;top:752px;width:1506px;height:1px;background:#BFB795;"></div>
<div style="left:32px;top:709px;width:1px;height:44px;background:#BFB795;"></div>
<div style="left:277px;top:709px;width:1px;height:44px;background:#BFB795;"></div>
<div style="left:382px;top:709px;width:1px;height:44px;background:#BFB795;"></div>
<div style="left:487px;top:709px;width:1px;height:44px;background:#BFB795;"></div>
<div style="left:592px;top:709px;width:1px;height:44px;background:#BFB795;"></div>
<div style="left:697px;top:709px;width:1px;height:44px;background:#BFB795;"></div>
<div style="left:802px;top:709px;width:1px;height:44px;background:#BFB795;"></div>
<div style="left:907px;top:709px;width:1px;height:44px;background:#BFB795;"></div>
<div style="left:1012px;top:709px;width:1px;height:44px;background:#BFB795;"></div>
<div style="left:1117px;top:709px;width:1px;height:44px;background:#BFB795;"></div>
<div style="left:1222px;top:709px;width:1px;height:44px;background:#BFB795;"></div>
<div style="left:1327px;top:709px;width:1px;height:44px;background:#BFB795;"></div>
<div style="left:1432px;top:709px;width:1px;height:44px;background:#BFB795;"></div>
<div style="left:1537px;top:709px;width:1px;height:44px;background:#BFB795;"></div>
<div class="t" style="left:35px;top:712px;font-size:11px;line-height:11px;color:#000;font-weight:bold;transform:scaleX(0.99);transform-origin:0 0;">Амортизатор 272-386 16x58/16x82 0/0</div>
<div class="t" style="left:35px;top:726px;font-size:11px;line-height:11px;color:#000;font-weight:bold;transform:scaleX(0.99);transform-origin:0 0;">SCHMITZ (1093977) / (RSB70098) (P59007)</div>
<div class="t" style="left:35px;top:740px;font-size:11px;line-height:11px;color:#000;font-weight:bold;transform:scaleX(0.99);transform-origin:0 0;">АНАЛОГ 9972</div>
<div class="t" style="right:1436px;top:712px;font-size:11px;line-height:11px;color:#000;text-align:right;">88</div>
<div class="t" style="right:806px;top:712px;font-size:11px;line-height:11px;color:#000;text-align:right;font-weight:bold;">88</div>
<div class="t" style="right:1226px;top:712px;font-size:11px;line-height:11px;color:#000;text-align:right;">3</div>
<div class="t" style="right:596px;top:712px;font-size:11px;line-height:11px;color:#000;text-align:right;font-weight:bold;">3</div>
<div style="left:32px;top:795px;width:1506px;height:1px;background:#BFB795;"></div>
<div style="left:32px;top:752px;width:1px;height:44px;background:#BFB795;"></div>
<div style="left:277px;top:752px;width:1px;height:44px;background:#BFB795;"></div>
<div style="left:382px;top:752px;width:1px;height:44px;background:#BFB795;"></div>
<div style="left:487px;top:752px;width:1px;height:44px;background:#BFB795;"></div>
<div style="left:592px;top:752px;width:1px;height:44px;background:#BFB795;"></div>
<div style="left:697px;top:752px;width:1px;height:44px;background:#BFB795;"></div>
<div style="left:802px;top:752px;width:1px;height:44px;background:#BFB795;"></div>
<div style="left:907px;top:752px;width:1px;height:44px;background:#BFB795;"></div>
<div style="left:1012px;top:752px;width:1px;height:44px;background:#BFB795;"></div>
<div style="left:1117px;top:752px;width:1px;height:44px;background:#BFB795;"></div>
<div style="left:1222px;top:752px;width:1px;height:44px;background:#BFB795;"></div>
<div style="left:1327px;top:752px;width:1px;height:44px;background:#BFB795;"></div>
<div style="left:1432px;top:752px;width:1px;height:44px;background:#BFB795;"></div>
<div style="left:1537px;top:752px;width:1px;height:44px;background:#BFB795;"></div>
<div class="t" style="left:35px;top:755px;font-size:11px;line-height:11px;color:#000;font-weight:bold;transform:scaleX(0.99);transform-origin:0 0;">Амортизатор 273-381 16x58/16x58 0/0</div>
<div class="t" style="left:35px;top:769px;font-size:11px;line-height:11px;color:#000;font-weight:bold;transform:scaleX(0.99);transform-origin:0 0;">SCHMITZ (016508) / ROSTAR (751011)</div>
<div class="t" style="left:35px;top:783px;font-size:11px;line-height:11px;color:#000;font-weight:bold;transform:scaleX(0.99);transform-origin:0 0;">АНАЛОГ 8354</div>
<div class="t" style="right:1436px;top:755px;font-size:11px;line-height:11px;color:#000;text-align:right;">129</div>
<div class="t" style="right:806px;top:755px;font-size:11px;line-height:11px;color:#000;text-align:right;font-weight:bold;">129</div>
<div class="t" style="right:1226px;top:755px;font-size:11px;line-height:11px;color:#000;text-align:right;">6</div>
<div class="t" style="right:596px;top:755px;font-size:11px;line-height:11px;color:#000;text-align:right;font-weight:bold;">6</div>
<div style="left:32px;top:824px;width:1506px;height:1px;background:#BFB795;"></div>
<div style="left:32px;top:795px;width:1px;height:30px;background:#BFB795;"></div>
<div style="left:277px;top:795px;width:1px;height:30px;background:#BFB795;"></div>
<div style="left:382px;top:795px;width:1px;height:30px;background:#BFB795;"></div>
<div style="left:487px;top:795px;width:1px;height:30px;background:#BFB795;"></div>
<div style="left:592px;top:795px;width:1px;height:30px;background:#BFB795;"></div>
<div style="left:697px;top:795px;width:1px;height:30px;background:#BFB795;"></div>
<div style="left:802px;top:795px;width:1px;height:30px;background:#BFB795;"></div>
<div style="left:907px;top:795px;width:1px;height:30px;background:#BFB795;"></div>
<div style="left:1012px;top:795px;width:1px;height:30px;background:#BFB795;"></div>
<div style="left:1117px;top:795px;width:1px;height:30px;background:#BFB795;"></div>
<div style="left:1222px;top:795px;width:1px;height:30px;background:#BFB795;"></div>
<div style="left:1327px;top:795px;width:1px;height:30px;background:#BFB795;"></div>
<div style="left:1432px;top:795px;width:1px;height:30px;background:#BFB795;"></div>
<div style="left:1537px;top:795px;width:1px;height:30px;background:#BFB795;"></div>
<div class="t" style="left:35px;top:798px;font-size:11px;line-height:11px;color:#000;font-weight:bold;transform:scaleX(0.99);transform-origin:0 0;">Амортизатор 275-374 24x58/24x58 0/0 ROR</div>
<div class="t" style="left:35px;top:812px;font-size:11px;line-height:11px;color:#000;font-weight:bold;transform:scaleX(0.99);transform-origin:0 0;">(21224778) / RSB70080</div>
<div class="t" style="right:1436px;top:798px;font-size:11px;line-height:11px;color:#000;text-align:right;">129</div>
<div class="t" style="right:806px;top:798px;font-size:11px;line-height:11px;color:#000;text-align:right;font-weight:bold;">129</div>
<div class="t" style="right:1226px;top:798px;font-size:11px;line-height:11px;color:#000;text-align:right;">8</div>
<div class="t" style="right:596px;top:798px;font-size:11px;line-height:11px;color:#000;text-align:right;font-weight:bold;">8</div>
<div style="left:32px;top:853px;width:1506px;height:1px;background:#BFB795;"></div>
<div style="left:32px;top:824px;width:1px;height:30px;background:#BFB795;"></div>
<div style="left:277px;top:824px;width:1px;height:30px;background:#BFB795;"></div>
<div style="left:382px;top:824px;width:1px;height:30px;background:#BFB795;"></div>
<div style="left:487px;top:824px;width:1px;height:30px;background:#BFB795;"></div>
<div style="left:592px;top:824px;width:1px;height:30px;background:#BFB795;"></div>
<div style="left:697px;top:824px;width:1px;height:30px;background:#BFB795;"></div>
<div style="left:802px;top:824px;width:1px;height:30px;background:#BFB795;"></div>
<div style="left:907px;top:824px;width:1px;height:30px;background:#BFB795;"></div>
<div style="left:1012px;top:824px;width:1px;height:30px;background:#BFB795;"></div>
<div style="left:1117px;top:824px;width:1px;height:30px;background:#BFB795;"></div>
<div style="left:1222px;top:824px;width:1px;height:30px;background:#BFB795;"></div>
<div style="left:1327px;top:824px;width:1px;height:30px;background:#BFB795;"></div>
<div style="left:1432px;top:824px;width:1px;height:30px;background:#BFB795;"></div>
<div style="left:1537px;top:824px;width:1px;height:30px;background:#BFB795;"></div>
<div class="t" style="left:35px;top:827px;font-size:11px;line-height:11px;color:#000;font-weight:bold;transform:scaleX(0.99);transform-origin:0 0;">Амортизатор 278-413 20x78/20x68 0/0 SAF</div>
<div class="t" style="left:35px;top:841px;font-size:11px;line-height:11px;color:#000;font-weight:bold;transform:scaleX(0.99);transform-origin:0 0;">(2.376.0070.00) / (RSB60290) АНАЛОГ 8141</div>
<div class="t" style="right:1436px;top:827px;font-size:11px;line-height:11px;color:#000;text-align:right;">35</div>
<div class="t" style="right:806px;top:827px;font-size:11px;line-height:11px;color:#000;text-align:right;font-weight:bold;">35</div>
<div class="t" style="right:1226px;top:827px;font-size:11px;line-height:11px;color:#000;text-align:right;">5</div>
<div class="t" style="right:596px;top:827px;font-size:11px;line-height:11px;color:#000;text-align:right;font-weight:bold;">5</div>
<div style="left:32px;top:882px;width:1506px;height:1px;background:#BFB795;"></div>
<div style="left:32px;top:853px;width:1px;height:30px;background:#BFB795;"></div>
<div style="left:277px;top:853px;width:1px;height:30px;background:#BFB795;"></div>
<div style="left:382px;top:853px;width:1px;height:30px;background:#BFB795;"></div>
<div style="left:487px;top:853px;width:1px;height:30px;background:#BFB795;"></div>
<div style="left:592px;top:853px;width:1px;height:30px;background:#BFB795;"></div>
<div style="left:697px;top:853px;width:1px;height:30px;background:#BFB795;"></div>
<div style="left:802px;top:853px;width:1px;height:30px;background:#BFB795;"></div>
<div style="left:907px;top:853px;width:1px;height:30px;background:#BFB795;"></div>
<div style="left:1012px;top:853px;width:1px;height:30px;background:#BFB795;"></div>
<div style="left:1117px;top:853px;width:1px;height:30px;background:#BFB795;"></div>
<div style="left:1222px;top:853px;width:1px;height:30px;background:#BFB795;"></div>
<div style="left:1327px;top:853px;width:1px;height:30px;background:#BFB795;"></div>
<div style="left:1432px;top:853px;width:1px;height:30px;background:#BFB795;"></div>
<div style="left:1537px;top:853px;width:1px;height:30px;background:#BFB795;"></div>
<div class="t" style="left:35px;top:856px;font-size:11px;line-height:11px;color:#000;font-weight:bold;transform:scaleX(0.99);transform-origin:0 0;">Амортизатор 280-410 20x78/20x68 0/0 SAF</div>
<div class="t" style="left:35px;top:870px;font-size:11px;line-height:11px;color:#000;font-weight:bold;transform:scaleX(0.99);transform-origin:0 0;">(2.376.0070.00) / AL-KO (0252) АНАЛОГ 8141</div>
<div class="t" style="right:1436px;top:856px;font-size:11px;line-height:11px;color:#000;text-align:right;">129</div>
<div class="t" style="right:806px;top:856px;font-size:11px;line-height:11px;color:#000;text-align:right;font-weight:bold;">129</div>
<div class="t" style="right:1226px;top:856px;font-size:11px;line-height:11px;color:#000;text-align:right;">2</div>
<div class="t" style="right:596px;top:856px;font-size:11px;line-height:11px;color:#000;text-align:right;font-weight:bold;">2</div>
<div style="left:32px;top:925px;width:1506px;height:1px;background:#BFB795;"></div>
<div style="left:32px;top:882px;width:1px;height:44px;background:#BFB795;"></div>
<div style="left:277px;top:882px;width:1px;height:44px;background:#BFB795;"></div>
<div style="left:382px;top:882px;width:1px;height:44px;background:#BFB795;"></div>
<div style="left:487px;top:882px;width:1px;height:44px;background:#BFB795;"></div>
<div style="left:592px;top:882px;width:1px;height:44px;background:#BFB795;"></div>
<div style="left:697px;top:882px;width:1px;height:44px;background:#BFB795;"></div>
<div style="left:802px;top:882px;width:1px;height:44px;background:#BFB795;"></div>
<div style="left:907px;top:882px;width:1px;height:44px;background:#BFB795;"></div>
<div style="left:1012px;top:882px;width:1px;height:44px;background:#BFB795;"></div>
<div style="left:1117px;top:882px;width:1px;height:44px;background:#BFB795;"></div>
<div style="left:1222px;top:882px;width:1px;height:44px;background:#BFB795;"></div>
<div style="left:1327px;top:882px;width:1px;height:44px;background:#BFB795;"></div>
<div style="left:1432px;top:882px;width:1px;height:44px;background:#BFB795;"></div>
<div style="left:1537px;top:882px;width:1px;height:44px;background:#BFB795;"></div>
<div class="t" style="left:35px;top:885px;font-size:11px;line-height:11px;color:#000;font-weight:bold;transform:scaleX(0.99);transform-origin:0 0;">Амортизатор 283-410 20x78/20x68 0/0 SAF</div>
<div class="t" style="left:35px;top:899px;font-size:11px;line-height:11px;color:#000;font-weight:bold;transform:scaleX(0.99);transform-origin:0 0;">(2.376.0070.00) / ROSTAR (759008) АНАЛОГ</div>
<div class="t" style="left:35px;top:913px;font-size:11px;line-height:11px;color:#000;font-weight:bold;transform:scaleX(0.99);transform-origin:0 0;">8141</div>
<div class="t" style="right:1436px;top:885px;font-size:11px;line-height:11px;color:#000;text-align:right;">129</div>
<div class="t" style="right:806px;top:885px;font-size:11px;line-height:11px;color:#000;text-align:right;font-weight:bold;">129</div>
<div class="t" style="right:1226px;top:885px;font-size:11px;line-height:11px;color:#000;text-align:right;">7</div>
<div class="t" style="right:596px;top:885px;font-size:11px;line-height:11px;color:#000;text-align:right;font-weight:bold;">7</div>
<div style="left:32px;top:954px;width:1506px;height:1px;background:#BFB795;"></div>
<div style="left:32px;top:925px;width:1px;height:30px;background:#BFB795;"></div>
<div style="left:277px;top:925px;width:1px;height:30px;background:#BFB795;"></div>
<div style="left:382px;top:925px;width:1px;height:30px;background:#BFB795;"></div>
<div style="left:487px;top:925px;width:1px;height:30px;background:#BFB795;"></div>
<div style="left:592px;top:925px;width:1px;height:30px;background:#BFB795;"></div>
<div style="left:697px;top:925px;width:1px;height:30px;background:#BFB795;"></div>
<div style="left:802px;top:925px;width:1px;height:30px;background:#BFB795;"></div>
<div style="left:907px;top:925px;width:1px;height:30px;background:#BFB795;"></div>
<div style="left:1012px;top:925px;width:1px;height:30px;background:#BFB795;"></div>
<div style="left:1117px;top:925px;width:1px;height:30px;background:#BFB795;"></div>
<div style="left:1222px;top:925px;width:1px;height:30px;background:#BFB795;"></div>
<div style="left:1327px;top:925px;width:1px;height:30px;background:#BFB795;"></div>
<div style="left:1432px;top:925px;width:1px;height:30px;background:#BFB795;"></div>
<div style="left:1537px;top:925px;width:1px;height:30px;background:#BFB795;"></div>
<div class="t" style="left:35px;top:928px;font-size:11px;line-height:11px;color:#000;font-weight:bold;transform:scaleX(0.99);transform-origin:0 0;">Амортизатор 294-429 20x62/20x62 0/0</div>
<div class="t" style="left:35px;top:942px;font-size:11px;line-height:11px;color:#000;font-weight:bold;transform:scaleX(0.99);transform-origin:0 0;">WEWELER (91-2643) / AL-KO.9551</div>
<div class="t" style="right:1436px;top:928px;font-size:11px;line-height:11px;color:#000;text-align:right;">129</div>
<div class="t" style="right:806px;top:928px;font-size:11px;line-height:11px;color:#000;text-align:right;font-weight:bold;">129</div>
<div class="t" style="right:1226px;top:928px;font-size:11px;line-height:11px;color:#000;text-align:right;">1</div>
<div class="t" style="right:596px;top:928px;font-size:11px;line-height:11px;color:#000;text-align:right;font-weight:bold;">1</div>
<div style="left:32px;top:997px;width:1506px;height:1px;background:#BFB795;"></div>
<div style="left:32px;top:954px;width:1px;height:41px;background:#BFB795;"></div>
<div style="left:277px;top:954px;width:1px;height:41px;background:#BFB795;"></div>
<div style="left:382px;top:954px;width:1px;height:41px;background:#BFB795;"></div>
<div style="left:487px;top:954px;width:1px;height:41px;background:#BFB795;"></div>
<div style="left:592px;top:954px;width:1px;height:41px;background:#BFB795;"></div>
<div style="left:697px;top:954px;width:1px;height:41px;background:#BFB795;"></div>
<div style="left:802px;top:954px;width:1px;height:41px;background:#BFB795;"></div>
<div style="left:907px;top:954px;width:1px;height:41px;background:#BFB795;"></div>
<div style="left:1012px;top:954px;width:1px;height:41px;background:#BFB795;"></div>
<div style="left:1117px;top:954px;width:1px;height:41px;background:#BFB795;"></div>
<div style="left:1222px;top:954px;width:1px;height:41px;background:#BFB795;"></div>
<div style="left:1327px;top:954px;width:1px;height:41px;background:#BFB795;"></div>
<div style="left:1432px;top:954px;width:1px;height:41px;background:#BFB795;"></div>
<div style="left:1537px;top:954px;width:1px;height:41px;background:#BFB795;"></div>
<div class="t" style="left:35px;top:957px;font-size:11px;line-height:11px;color:#000;font-weight:bold;transform:scaleX(0.99);transform-origin:0 0;">Амортизатор 296-429 20x62/20x62 0/0</div>
<div class="t" style="left:35px;top:971px;font-size:11px;line-height:11px;color:#000;font-weight:bold;transform:scaleX(0.99);transform-origin:0 0;">SCHMITZ (017 090) (на Йорк) / RSB70035</div>
<div class="t" style="left:35px;top:985px;font-size:11px;line-height:11px;color:#000;font-weight:bold;transform:scaleX(0.99);transform-origin:0 0;">АНАЛОГ 5643</div>
<div class="t" style="right:1436px;top:957px;font-size:11px;line-height:11px;color:#000;text-align:right;">129</div>
<div class="t" style="right:806px;top:957px;font-size:11px;line-height:11px;color:#000;text-align:right;font-weight:bold;">129</div>
<div class="t" style="right:1226px;top:957px;font-size:11px;line-height:11px;color:#000;text-align:right;">21</div>
<div class="t" style="right:596px;top:957px;font-size:11px;line-height:11px;color:#000;text-align:right;font-weight:bold;">21</div>
<div style="left:279px;top:682px;width:312px;height:26px;background:#FFFFFF;"></div>
<div style="left:280px;top:683px;width:310px;height:24px;background:#D5DAEE;"></div>
<div style="left:382px;top:680px;width:1px;height:30px;background:#BFB795;"></div>
<div style="left:487px;top:680px;width:1px;height:30px;background:#BFB795;"></div>
<div class="t" style="right:1541px;top:683px;font-size:11px;line-height:11px;color:#000;text-align:right;">2</div>
<div class="t" style="right:1436px;top:683px;font-size:11px;line-height:11px;color:#000;text-align:right;">129</div>
<div class="t" style="right:1331px;top:683px;font-size:11px;line-height:11px;color:#000;text-align:right;">0,016</div>
<div style="left:276px;top:679px;width:318px;height:32px;border:3px solid #0E1020;box-sizing:border-box;box-shadow:inset 0 0 0 0 #000"></div>
<div style="left:277px;top:680px;width:316px;height:1px;background:#4A5590;"></div>
<div style="left:277px;top:709px;width:316px;height:1px;background:#4A5590;"></div>
<div style="left:277px;top:680px;width:1px;height:30px;background:#4A5590;"></div>
<div style="left:592px;top:680px;width:1px;height:30px;background:#4A5590;"></div>
<div style="left:1902px;top:30px;width:17px;height:965px;background:linear-gradient(90deg,#E6E6E6,#F2F2F2 20%,#F4F4F4 80%,#E8E8E8);"></div>
<svg style="left:1907px;top:36px;" width="9" height="6" viewBox="0 0 9 6"><path d="M0.5 5 L4.5 1 L8.5 5 Z" fill="#505050"/></svg>
<div style="left:1903px;top:48px;width:15px;height:830px;border:1px solid #9A9A9A;border-radius:2px;box-sizing:border-box;background:linear-gradient(90deg,#F2F2F2 0%,#EAEAEA 45%,#D6D6D8 55%,#CACACC 100%)"></div>
<div style="left:1907px;top:459px;width:7px;height:1px;background:#3A3A3A;"></div>
<div style="left:1907px;top:461px;width:7px;height:1px;background:#3A3A3A;"></div>
<div style="left:1907px;top:463px;width:7px;height:1px;background:#3A3A3A;"></div>
<div style="left:1907px;top:465px;width:7px;height:1px;background:#C0C0C0;"></div>
<svg style="left:1907px;top:984px;" width="9" height="6" viewBox="0 0 9 6"><path d="M0.5 1 L4.5 5 L8.5 1 Z" fill="#505050"/></svg>
<div style="left:8px;top:995px;width:1894px;height:17px;background:linear-gradient(180deg,#E6E6E6,#F2F2F2 20%,#F4F4F4 80%,#E8E8E8);"></div>
<svg style="left:12px;top:998px;" width="6" height="9" viewBox="0 0 6 9"><path d="M5 0.5 L1 4.5 L5 8.5 Z" fill="#505050"/></svg>
<div style="left:26px;top:996px;width:1833px;height:15px;border:1px solid #9A9A9A;border-radius:2px;box-sizing:border-box;background:linear-gradient(180deg,#F2F2F2 0%,#EAEAEA 45%,#D6D6D8 55%,#CACACC 100%)"></div>
<div style="left:938px;top:1000px;width:1px;height:7px;background:#3A3A3A;"></div>
<div style="left:940px;top:1000px;width:1px;height:7px;background:#3A3A3A;"></div>
<div style="left:942px;top:1000px;width:1px;height:7px;background:#3A3A3A;"></div>
<div style="left:944px;top:1000px;width:1px;height:7px;background:#C0C0C0;"></div>
<svg style="left:1892px;top:998px;" width="6" height="9" viewBox="0 0 6 9"><path d="M1 0.5 L5 4.5 L1 8.5 Z" fill="#505050"/></svg>
<div style="left:1902px;top:995px;width:17px;height:17px;background:#F0F0F0;"></div>
<div style="left:1913px;top:1000px;width:2px;height:2px;background:#B0B0B0;"></div>
<div style="left:1910px;top:1003px;width:2px;height:2px;background:#B0B0B0;"></div>
<div style="left:1913px;top:1003px;width:2px;height:2px;background:#B0B0B0;"></div>
<div style="left:1907px;top:1006px;width:2px;height:2px;background:#B0B0B0;"></div>
<div style="left:1910px;top:1006px;width:2px;height:2px;background:#B0B0B0;"></div>
<div style="left:1913px;top:1006px;width:2px;height:2px;background:#B0B0B0;"></div>
</body></html>
